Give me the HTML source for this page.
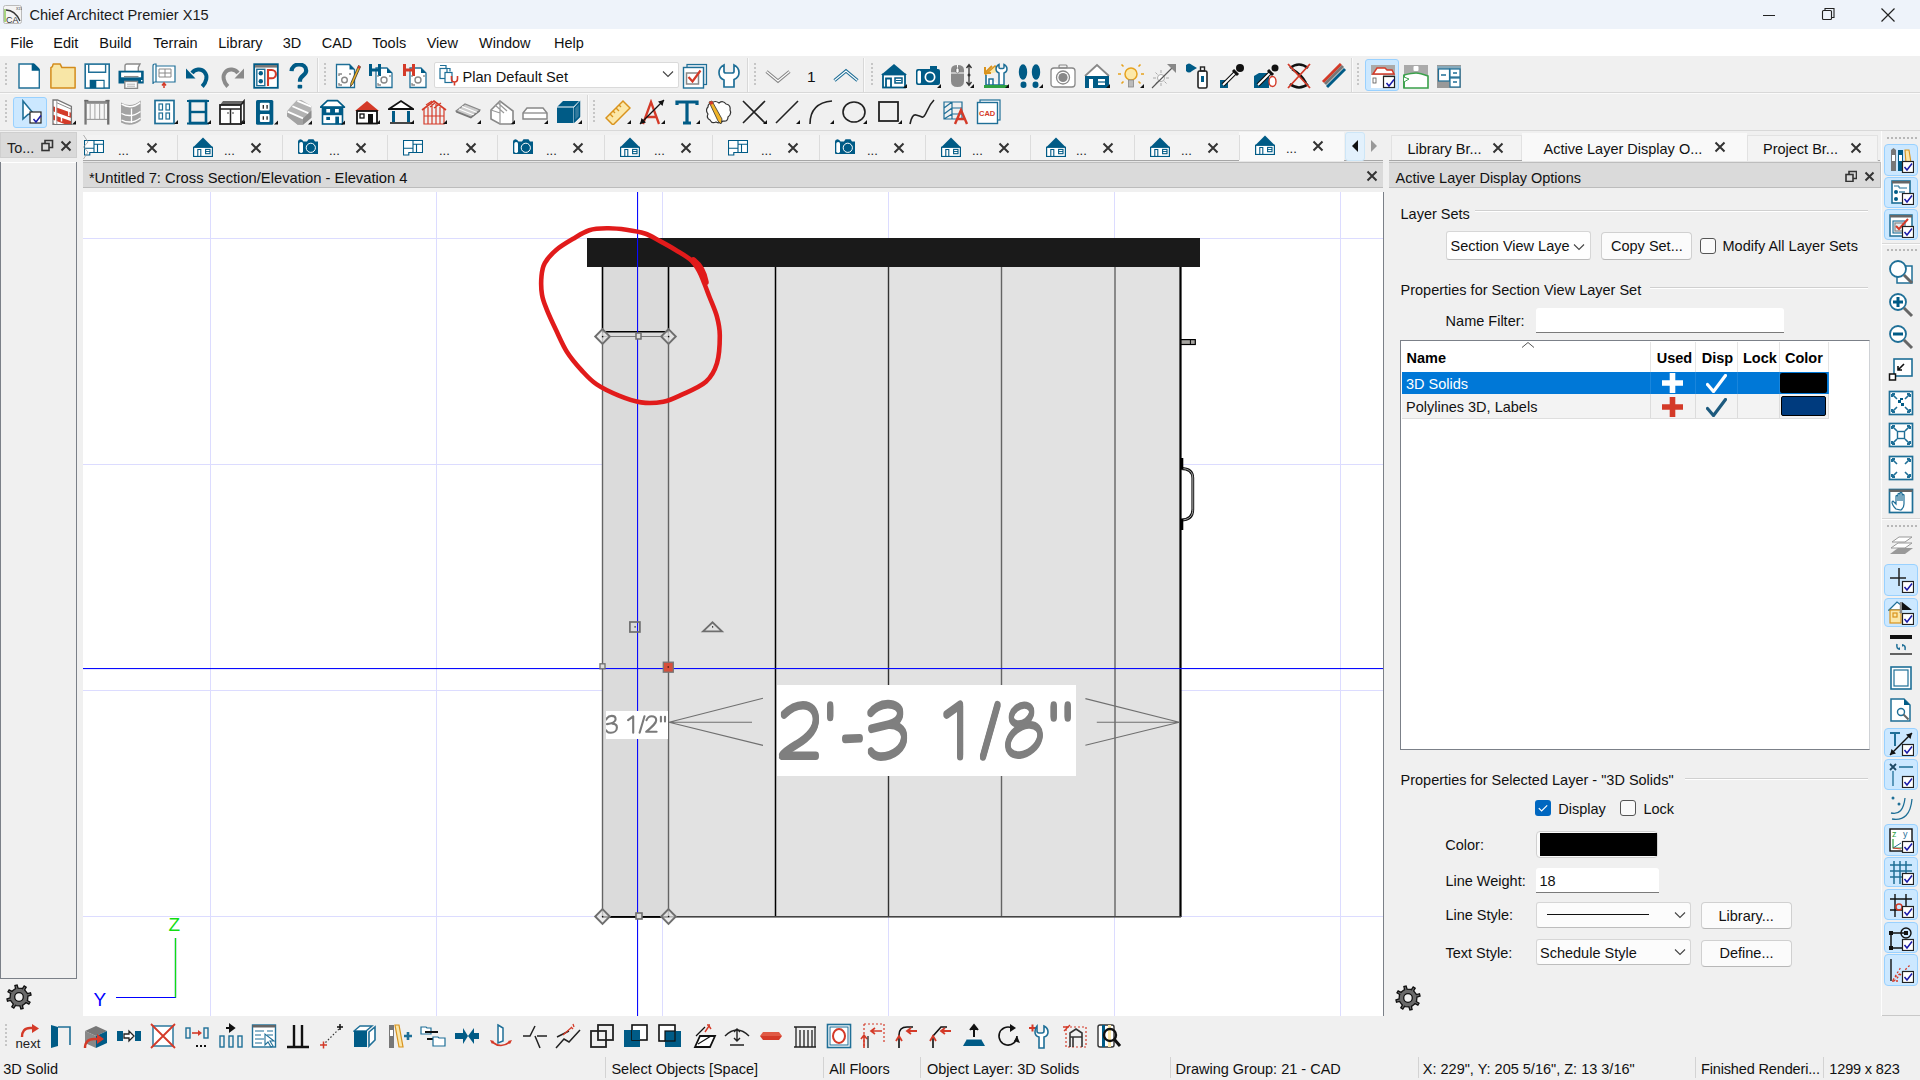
<!DOCTYPE html>
<html><head><meta charset="utf-8"><title>Chief Architect Premier X15</title>
<style>
html,body{margin:0;padding:0;width:1920px;height:1080px;overflow:hidden;background:#f0f0f0;font-family:"Liberation Sans", sans-serif;}
body>div,body>svg{position:absolute;}
.t{white-space:pre;}
</style></head><body>
<div style="left:0px;top:0px;width:1920px;height:29px;background:#eef3fa"></div>
<svg style="left:3px;top:5px;" width="19" height="19" viewBox="0 0 19 19"><rect x="0.5" y="0.5" width="18" height="18" rx="2" fill="#f4f4f4" stroke="#bbb"/><path d="M2 17V4" stroke="#7cc242" stroke-width="1.3"/><path d="M3 5Q12 5 17 16" fill="none" stroke="#333" stroke-width="1.3"/><text x="3" y="17.5" font-family="Liberation Sans" font-size="9" fill="#333">CA</text><text x="13" y="5" font-family="Liberation Sans" font-size="3.5" fill="#333">X15</text></svg>
<div class="t" style="left:29.4px;top:7.84px;font-size:14.6px;line-height:14.6px;color:#1b1b1b;font-weight:400;">Chief Architect Premier X15</div>
<svg style="left:1762px;top:8px;" width="16" height="14" viewBox="0 0 16 14"><path d="M1 7.5h12" stroke="#222" stroke-width="1"/></svg>
<svg style="left:1821px;top:7px;" width="16" height="16" viewBox="0 0 16 16"><rect x="1.5" y="3.5" width="9" height="9" fill="none" stroke="#222" stroke-width="1.1" rx="1"/><path d="M4 3.5V1.5h9v9h-2" fill="none" stroke="#222" stroke-width="1.1"/></svg>
<svg style="left:1880px;top:7px;" width="16" height="16" viewBox="0 0 16 16"><path d="M1.5 1.5l13 13M14.5 1.5l-13 13" stroke="#222" stroke-width="1.2"/></svg>
<div style="left:0px;top:29px;width:1920px;height:27px;background:#ffffff"></div>
<div class="t" style="left:10.3px;top:36.03px;font-size:14.5px;line-height:14.5px;color:#111;font-weight:400;">File</div>
<div class="t" style="left:53.3px;top:36.03px;font-size:14.5px;line-height:14.5px;color:#111;font-weight:400;">Edit</div>
<div class="t" style="left:99.3px;top:36.03px;font-size:14.5px;line-height:14.5px;color:#111;font-weight:400;">Build</div>
<div class="t" style="left:153.3px;top:36.03px;font-size:14.5px;line-height:14.5px;color:#111;font-weight:400;">Terrain</div>
<div class="t" style="left:218.3px;top:36.03px;font-size:14.5px;line-height:14.5px;color:#111;font-weight:400;">Library</div>
<div class="t" style="left:282.7px;top:36.03px;font-size:14.5px;line-height:14.5px;color:#111;font-weight:400;">3D</div>
<div class="t" style="left:321.7px;top:36.03px;font-size:14.5px;line-height:14.5px;color:#111;font-weight:400;">CAD</div>
<div class="t" style="left:372.3px;top:36.03px;font-size:14.5px;line-height:14.5px;color:#111;font-weight:400;">Tools</div>
<div class="t" style="left:426.7px;top:36.03px;font-size:14.5px;line-height:14.5px;color:#111;font-weight:400;">View</div>
<div class="t" style="left:479px;top:36.03px;font-size:14.5px;line-height:14.5px;color:#111;font-weight:400;">Window</div>
<div class="t" style="left:554px;top:36.03px;font-size:14.5px;line-height:14.5px;color:#111;font-weight:400;">Help</div>
<div style="left:0px;top:56px;width:1920px;height:74px;background:#f0f0f0"></div>
<div style="left:0px;top:92px;width:1920px;height:1px;background:#d8d8d8"></div>
<div style="left:0px;top:93px;width:1920px;height:1px;background:#fafafa"></div>
<div style="left:0px;top:130px;width:1920px;height:1px;background:#d8d8d8"></div>
<div style="left:317px;top:58px;width:1px;height:34px;background:#d8d8d8"></div>
<div style="left:318px;top:58px;width:1px;height:34px;background:#fafafa"></div>
<div style="left:747px;top:58px;width:1px;height:34px;background:#d8d8d8"></div>
<div style="left:748px;top:58px;width:1px;height:34px;background:#fafafa"></div>
<div style="left:863px;top:58px;width:1px;height:34px;background:#d8d8d8"></div>
<div style="left:864px;top:58px;width:1px;height:34px;background:#fafafa"></div>
<div style="left:1351px;top:58px;width:1px;height:34px;background:#d8d8d8"></div>
<div style="left:1352px;top:58px;width:1px;height:34px;background:#fafafa"></div>
<div style="left:587px;top:95px;width:1px;height:35px;background:#d8d8d8"></div>
<div style="left:588px;top:95px;width:1px;height:35px;background:#fafafa"></div>
<svg style="left:5px;top:63px;" width="2" height="24" viewBox="0 0 2 24"><rect x="0" y="0" width="2" height="2" fill="#c6c6c6"/><rect x="0" y="4" width="2" height="2" fill="#c6c6c6"/><rect x="0" y="8" width="2" height="2" fill="#c6c6c6"/><rect x="0" y="12" width="2" height="2" fill="#c6c6c6"/><rect x="0" y="16" width="2" height="2" fill="#c6c6c6"/><rect x="0" y="20" width="2" height="2" fill="#c6c6c6"/></svg>
<svg style="left:324px;top:63px;" width="2" height="24" viewBox="0 0 2 24"><rect x="0" y="0" width="2" height="2" fill="#c6c6c6"/><rect x="0" y="4" width="2" height="2" fill="#c6c6c6"/><rect x="0" y="8" width="2" height="2" fill="#c6c6c6"/><rect x="0" y="12" width="2" height="2" fill="#c6c6c6"/><rect x="0" y="16" width="2" height="2" fill="#c6c6c6"/><rect x="0" y="20" width="2" height="2" fill="#c6c6c6"/></svg>
<svg style="left:754px;top:63px;" width="2" height="24" viewBox="0 0 2 24"><rect x="0" y="0" width="2" height="2" fill="#c6c6c6"/><rect x="0" y="4" width="2" height="2" fill="#c6c6c6"/><rect x="0" y="8" width="2" height="2" fill="#c6c6c6"/><rect x="0" y="12" width="2" height="2" fill="#c6c6c6"/><rect x="0" y="16" width="2" height="2" fill="#c6c6c6"/><rect x="0" y="20" width="2" height="2" fill="#c6c6c6"/></svg>
<svg style="left:871px;top:63px;" width="2" height="24" viewBox="0 0 2 24"><rect x="0" y="0" width="2" height="2" fill="#c6c6c6"/><rect x="0" y="4" width="2" height="2" fill="#c6c6c6"/><rect x="0" y="8" width="2" height="2" fill="#c6c6c6"/><rect x="0" y="12" width="2" height="2" fill="#c6c6c6"/><rect x="0" y="16" width="2" height="2" fill="#c6c6c6"/><rect x="0" y="20" width="2" height="2" fill="#c6c6c6"/></svg>
<svg style="left:1357px;top:63px;" width="2" height="24" viewBox="0 0 2 24"><rect x="0" y="0" width="2" height="2" fill="#c6c6c6"/><rect x="0" y="4" width="2" height="2" fill="#c6c6c6"/><rect x="0" y="8" width="2" height="2" fill="#c6c6c6"/><rect x="0" y="12" width="2" height="2" fill="#c6c6c6"/><rect x="0" y="16" width="2" height="2" fill="#c6c6c6"/><rect x="0" y="20" width="2" height="2" fill="#c6c6c6"/></svg>
<svg style="left:5px;top:100px;" width="2" height="24" viewBox="0 0 2 24"><rect x="0" y="0" width="2" height="2" fill="#c6c6c6"/><rect x="0" y="4" width="2" height="2" fill="#c6c6c6"/><rect x="0" y="8" width="2" height="2" fill="#c6c6c6"/><rect x="0" y="12" width="2" height="2" fill="#c6c6c6"/><rect x="0" y="16" width="2" height="2" fill="#c6c6c6"/><rect x="0" y="20" width="2" height="2" fill="#c6c6c6"/></svg>
<svg style="left:593px;top:100px;" width="2" height="24" viewBox="0 0 2 24"><rect x="0" y="0" width="2" height="2" fill="#c6c6c6"/><rect x="0" y="4" width="2" height="2" fill="#c6c6c6"/><rect x="0" y="8" width="2" height="2" fill="#c6c6c6"/><rect x="0" y="12" width="2" height="2" fill="#c6c6c6"/><rect x="0" y="16" width="2" height="2" fill="#c6c6c6"/><rect x="0" y="20" width="2" height="2" fill="#c6c6c6"/></svg>
<div style="left:0px;top:131px;width:1920px;height:885px;background:#f0f0f0"></div>
<div style="left:0px;top:132px;width:77px;height:26px;background:#dadada;border:1px solid #cfcfcf;box-sizing:border-box"></div>
<div class="t" style="left:7px;top:140.73px;font-size:14.5px;line-height:14.5px;color:#222;font-weight:400;">To...</div>
<svg style="left:41px;top:139px;" width="13" height="13" viewBox="0 0 13 13"><rect x="1" y="4.5" width="7" height="7" fill="none" stroke="#333" stroke-width="1.6"/><path d="M4 4.5V1.5h7.5v7H8" fill="none" stroke="#333" stroke-width="1.6"/></svg>
<svg style="left:60px;top:140px;" width="12" height="12" viewBox="0 0 12 12"><path d="M1.5 1.5l9 9M10.5 1.5l-9 9" stroke="#333" stroke-width="2"/></svg>
<div style="left:0px;top:162px;width:77px;height:817px;border:1px solid #7b8088;border-top:none;box-sizing:border-box;background:#f0f0f0"></div>
<div style="left:1px;top:162px;width:75px;height:1px;background:#fff"></div>
<svg style="left:5.5px;top:984.3px;" width="26" height="26" viewBox="0 0 26 26"><path d="M21.60 15.66 L21.31 16.46 L24.03 18.21 L22.86 20.19 L20.02 18.64 L17.20 20.96 L17.20 20.96 L16.43 21.32 L17.11 24.49 L14.89 25.05 L13.97 21.95 L10.34 21.60 L10.34 21.60 L9.54 21.31 L7.79 24.03 L5.81 22.86 L7.36 20.02 L5.04 17.20 L5.04 17.20 L4.68 16.43 L1.51 17.11 L0.95 14.89 L4.05 13.97 L4.40 10.34 L4.40 10.34 L4.69 9.54 L1.97 7.79 L3.14 5.81 L5.98 7.36 L8.80 5.04 L8.80 5.04 L9.57 4.68 L8.89 1.51 L11.11 0.95 L12.03 4.05 L15.66 4.40 L15.66 4.40 L16.46 4.69 L18.21 1.97 L20.19 3.14 L18.64 5.98 L20.96 8.80 L20.96 8.80 L21.32 9.57 L24.49 8.89 L25.05 11.11 L21.95 12.03 L21.60 15.66Z" fill="#6a6a6a" stroke="#111" stroke-width="1.3"/><circle cx="13" cy="13" r="4.3" fill="#f0f0f0" stroke="#111" stroke-width="1.3"/></svg>
<svg style="left:1394.5px;top:984.5px;" width="26" height="26" viewBox="0 0 26 26"><path d="M21.60 15.66 L21.31 16.46 L24.03 18.21 L22.86 20.19 L20.02 18.64 L17.20 20.96 L17.20 20.96 L16.43 21.32 L17.11 24.49 L14.89 25.05 L13.97 21.95 L10.34 21.60 L10.34 21.60 L9.54 21.31 L7.79 24.03 L5.81 22.86 L7.36 20.02 L5.04 17.20 L5.04 17.20 L4.68 16.43 L1.51 17.11 L0.95 14.89 L4.05 13.97 L4.40 10.34 L4.40 10.34 L4.69 9.54 L1.97 7.79 L3.14 5.81 L5.98 7.36 L8.80 5.04 L8.80 5.04 L9.57 4.68 L8.89 1.51 L11.11 0.95 L12.03 4.05 L15.66 4.40 L15.66 4.40 L16.46 4.69 L18.21 1.97 L20.19 3.14 L18.64 5.98 L20.96 8.80 L20.96 8.80 L21.32 9.57 L24.49 8.89 L25.05 11.11 L21.95 12.03 L21.60 15.66Z" fill="#6a6a6a" stroke="#111" stroke-width="1.3"/><circle cx="13" cy="13" r="4.3" fill="#f0f0f0" stroke="#111" stroke-width="1.3"/></svg>
<div style="left:83px;top:132px;width:1300px;height:29px;background:#f0f0f0"></div>
<div style="left:83px;top:160px;width:1300px;height:1px;background:#a6a6a6"></div>
<div style="left:83px;top:161px;width:1300px;height:1px;background:#e6e6e6"></div>
<div style="left:83px;top:135px;width:94px;height:25px;background:#f3f3f3"></div>
<div style="left:177px;top:135px;width:105px;height:25px;background:#f3f3f3"></div>
<div style="left:282px;top:135px;width:105px;height:25px;background:#f3f3f3"></div>
<div style="left:387px;top:135px;width:110px;height:25px;background:#f3f3f3"></div>
<div style="left:497px;top:135px;width:107px;height:25px;background:#f3f3f3"></div>
<div style="left:604px;top:135px;width:108px;height:25px;background:#f3f3f3"></div>
<div style="left:712px;top:135px;width:107px;height:25px;background:#f3f3f3"></div>
<div style="left:819px;top:135px;width:106px;height:25px;background:#f3f3f3"></div>
<div style="left:925px;top:135px;width:105px;height:25px;background:#f3f3f3"></div>
<div style="left:1030px;top:135px;width:104px;height:25px;background:#f3f3f3"></div>
<div style="left:1134px;top:135px;width:105px;height:25px;background:#f3f3f3"></div>
<div style="left:1239px;top:132px;width:105px;height:29px;background:#f9f9f9"></div>
<div style="left:177px;top:135px;width:1px;height:25px;background:#dcdcdc"></div>
<div style="left:282px;top:135px;width:1px;height:25px;background:#dcdcdc"></div>
<div style="left:387px;top:135px;width:1px;height:25px;background:#dcdcdc"></div>
<div style="left:497px;top:135px;width:1px;height:25px;background:#dcdcdc"></div>
<div style="left:604px;top:135px;width:1px;height:25px;background:#dcdcdc"></div>
<div style="left:712px;top:135px;width:1px;height:25px;background:#dcdcdc"></div>
<div style="left:819px;top:135px;width:1px;height:25px;background:#dcdcdc"></div>
<div style="left:925px;top:135px;width:1px;height:25px;background:#dcdcdc"></div>
<div style="left:1030px;top:135px;width:1px;height:25px;background:#dcdcdc"></div>
<div style="left:1134px;top:135px;width:1px;height:25px;background:#dcdcdc"></div>
<div style="left:1239px;top:135px;width:1px;height:25px;background:#dcdcdc"></div>
<svg style="left:84px;top:140px;" width="20" height="16" viewBox="0 0 20 16"><path d="M0.5 0.5h19v12H5.8v2.5H0.5zM10 0.5v12M0.5 8.3H10M10 4.3h9.5M13.5 4.3v8.2" fill="#fff" stroke="#005b86" stroke-width="1.1"/></svg>
<div class="t" style="left:118px;top:144.00px;font-size:13px;line-height:13px;color:#222;font-weight:400;">...</div>
<svg style="left:145.5px;top:142px;" width="12" height="12" viewBox="0 0 12 12"><path d="M1.5 1.5l9 9M10.5 1.5l-9 9" stroke="#333" stroke-width="2"/></svg>
<svg style="left:193px;top:137px;" width="20" height="20" viewBox="0 0 20 20"><path d="M0 10.5L10 0.5l10 10z" fill="#005b86"/><rect x="0.6" y="10.3" width="18.8" height="9.2" fill="#fff" stroke="#005b86" stroke-width="1.2"/><path d="M4.8 19.5v-7h3v7" fill="none" stroke="#005b86" stroke-width="1.1"/><rect x="12.6" y="12.4" width="4.4" height="4.3" fill="none" stroke="#005b86" stroke-width="1.1"/><path d="M12.6 14.5h4.4" stroke="#005b86" stroke-width="0.9"/></svg>
<div class="t" style="left:224px;top:144.00px;font-size:13px;line-height:13px;color:#222;font-weight:400;">...</div>
<svg style="left:250px;top:142px;" width="12" height="12" viewBox="0 0 12 12"><path d="M1.5 1.5l9 9M10.5 1.5l-9 9" stroke="#333" stroke-width="2"/></svg>
<svg style="left:298px;top:139px;" width="20" height="15" viewBox="0 0 20 15"><path d="M0 2.5q0-2 2.5-2.2 2 .2 3 2.2h3.5l1.5-2.2h5l1.5 2.2h3v12.5H1q-1 0-1-1z" fill="#005b86"/><rect x="1.3" y="3" width="3.7" height="11" rx="1.8" fill="#fff"/><circle cx="12.8" cy="8.8" r="4.6" fill="#005b86" stroke="#fff" stroke-width="1"/></svg>
<div class="t" style="left:329px;top:144.00px;font-size:13px;line-height:13px;color:#222;font-weight:400;">...</div>
<svg style="left:355px;top:142px;" width="12" height="12" viewBox="0 0 12 12"><path d="M1.5 1.5l9 9M10.5 1.5l-9 9" stroke="#333" stroke-width="2"/></svg>
<svg style="left:403px;top:140px;" width="20" height="16" viewBox="0 0 20 16"><path d="M0.5 0.5h19v12H5.8v2.5H0.5zM10 0.5v12M0.5 8.3H10M10 4.3h9.5M13.5 4.3v8.2" fill="#fff" stroke="#005b86" stroke-width="1.1"/></svg>
<div class="t" style="left:439px;top:144.00px;font-size:13px;line-height:13px;color:#222;font-weight:400;">...</div>
<svg style="left:465px;top:142px;" width="12" height="12" viewBox="0 0 12 12"><path d="M1.5 1.5l9 9M10.5 1.5l-9 9" stroke="#333" stroke-width="2"/></svg>
<svg style="left:513px;top:139px;" width="20" height="15" viewBox="0 0 20 15"><path d="M0 2.5q0-2 2.5-2.2 2 .2 3 2.2h3.5l1.5-2.2h5l1.5 2.2h3v12.5H1q-1 0-1-1z" fill="#005b86"/><rect x="1.3" y="3" width="3.7" height="11" rx="1.8" fill="#fff"/><circle cx="12.8" cy="8.8" r="4.6" fill="#005b86" stroke="#fff" stroke-width="1"/></svg>
<div class="t" style="left:546px;top:144.00px;font-size:13px;line-height:13px;color:#222;font-weight:400;">...</div>
<svg style="left:572px;top:142px;" width="12" height="12" viewBox="0 0 12 12"><path d="M1.5 1.5l9 9M10.5 1.5l-9 9" stroke="#333" stroke-width="2"/></svg>
<svg style="left:620px;top:137px;" width="20" height="20" viewBox="0 0 20 20"><path d="M0 10.5L10 0.5l10 10z" fill="#005b86"/><rect x="0.6" y="10.3" width="18.8" height="9.2" fill="#fff" stroke="#005b86" stroke-width="1.2"/><path d="M4.8 19.5v-7h3v7" fill="none" stroke="#005b86" stroke-width="1.1"/><rect x="12.6" y="12.4" width="4.4" height="4.3" fill="none" stroke="#005b86" stroke-width="1.1"/><path d="M12.6 14.5h4.4" stroke="#005b86" stroke-width="0.9"/></svg>
<div class="t" style="left:654px;top:144.00px;font-size:13px;line-height:13px;color:#222;font-weight:400;">...</div>
<svg style="left:680px;top:142px;" width="12" height="12" viewBox="0 0 12 12"><path d="M1.5 1.5l9 9M10.5 1.5l-9 9" stroke="#333" stroke-width="2"/></svg>
<svg style="left:728px;top:140px;" width="20" height="16" viewBox="0 0 20 16"><path d="M0.5 0.5h19v12H5.8v2.5H0.5zM10 0.5v12M0.5 8.3H10M10 4.3h9.5M13.5 4.3v8.2" fill="#fff" stroke="#005b86" stroke-width="1.1"/></svg>
<div class="t" style="left:761px;top:144.00px;font-size:13px;line-height:13px;color:#222;font-weight:400;">...</div>
<svg style="left:787px;top:142px;" width="12" height="12" viewBox="0 0 12 12"><path d="M1.5 1.5l9 9M10.5 1.5l-9 9" stroke="#333" stroke-width="2"/></svg>
<svg style="left:835px;top:139px;" width="20" height="15" viewBox="0 0 20 15"><path d="M0 2.5q0-2 2.5-2.2 2 .2 3 2.2h3.5l1.5-2.2h5l1.5 2.2h3v12.5H1q-1 0-1-1z" fill="#005b86"/><rect x="1.3" y="3" width="3.7" height="11" rx="1.8" fill="#fff"/><circle cx="12.8" cy="8.8" r="4.6" fill="#005b86" stroke="#fff" stroke-width="1"/></svg>
<div class="t" style="left:867px;top:144.00px;font-size:13px;line-height:13px;color:#222;font-weight:400;">...</div>
<svg style="left:893px;top:142px;" width="12" height="12" viewBox="0 0 12 12"><path d="M1.5 1.5l9 9M10.5 1.5l-9 9" stroke="#333" stroke-width="2"/></svg>
<svg style="left:941px;top:137px;" width="20" height="20" viewBox="0 0 20 20"><path d="M0 10.5L10 0.5l10 10z" fill="#005b86"/><rect x="0.6" y="10.3" width="18.8" height="9.2" fill="#fff" stroke="#005b86" stroke-width="1.2"/><path d="M4.8 19.5v-7h3v7" fill="none" stroke="#005b86" stroke-width="1.1"/><rect x="12.6" y="12.4" width="4.4" height="4.3" fill="none" stroke="#005b86" stroke-width="1.1"/><path d="M12.6 14.5h4.4" stroke="#005b86" stroke-width="0.9"/></svg>
<div class="t" style="left:972px;top:144.00px;font-size:13px;line-height:13px;color:#222;font-weight:400;">...</div>
<svg style="left:998px;top:142px;" width="12" height="12" viewBox="0 0 12 12"><path d="M1.5 1.5l9 9M10.5 1.5l-9 9" stroke="#333" stroke-width="2"/></svg>
<svg style="left:1046px;top:137px;" width="20" height="20" viewBox="0 0 20 20"><path d="M0 10.5L10 0.5l10 10z" fill="#005b86"/><rect x="0.6" y="10.3" width="18.8" height="9.2" fill="#fff" stroke="#005b86" stroke-width="1.2"/><path d="M4.8 19.5v-7h3v7" fill="none" stroke="#005b86" stroke-width="1.1"/><rect x="12.6" y="12.4" width="4.4" height="4.3" fill="none" stroke="#005b86" stroke-width="1.1"/><path d="M12.6 14.5h4.4" stroke="#005b86" stroke-width="0.9"/></svg>
<div class="t" style="left:1076px;top:144.00px;font-size:13px;line-height:13px;color:#222;font-weight:400;">...</div>
<svg style="left:1102px;top:142px;" width="12" height="12" viewBox="0 0 12 12"><path d="M1.5 1.5l9 9M10.5 1.5l-9 9" stroke="#333" stroke-width="2"/></svg>
<svg style="left:1150px;top:137px;" width="20" height="20" viewBox="0 0 20 20"><path d="M0 10.5L10 0.5l10 10z" fill="#005b86"/><rect x="0.6" y="10.3" width="18.8" height="9.2" fill="#fff" stroke="#005b86" stroke-width="1.2"/><path d="M4.8 19.5v-7h3v7" fill="none" stroke="#005b86" stroke-width="1.1"/><rect x="12.6" y="12.4" width="4.4" height="4.3" fill="none" stroke="#005b86" stroke-width="1.1"/><path d="M12.6 14.5h4.4" stroke="#005b86" stroke-width="0.9"/></svg>
<div class="t" style="left:1181px;top:144.00px;font-size:13px;line-height:13px;color:#222;font-weight:400;">...</div>
<svg style="left:1207px;top:142px;" width="12" height="12" viewBox="0 0 12 12"><path d="M1.5 1.5l9 9M10.5 1.5l-9 9" stroke="#333" stroke-width="2"/></svg>
<svg style="left:1255px;top:135px;" width="20" height="20" viewBox="0 0 20 20"><path d="M0 10.5L10 0.5l10 10z" fill="#005b86"/><rect x="0.6" y="10.3" width="18.8" height="9.2" fill="#fff" stroke="#005b86" stroke-width="1.2"/><path d="M4.8 19.5v-7h3v7" fill="none" stroke="#005b86" stroke-width="1.1"/><rect x="12.6" y="12.4" width="4.4" height="4.3" fill="none" stroke="#005b86" stroke-width="1.1"/><path d="M12.6 14.5h4.4" stroke="#005b86" stroke-width="0.9"/></svg>
<div class="t" style="left:1286px;top:142.00px;font-size:13px;line-height:13px;color:#222;font-weight:400;">...</div>
<svg style="left:1312px;top:140px;" width="12" height="12" viewBox="0 0 12 12"><path d="M1.5 1.5l9 9M10.5 1.5l-9 9" stroke="#333" stroke-width="2"/></svg>
<svg style="left:83px;top:134px;" width="6" height="26" viewBox="0 0 6 26"><path d="M0.5 1l4.5 7-4.5 5 4.5 5-4.5 7" fill="none" stroke="#9a9a9a" stroke-width="0.8"/></svg>
<div style="left:1345px;top:132px;width:20px;height:29px;background:#e3f1fc;border:1px solid #cde6f7;border-radius:3px;box-sizing:border-box"></div>
<svg style="left:1350px;top:139px;" width="10" height="14" viewBox="0 0 10 14"><path d="M8 1L2 7l6 6z" fill="#111"/></svg>
<svg style="left:1369px;top:139px;" width="10" height="14" viewBox="0 0 10 14"><path d="M2 1l6 6-6 6z" fill="#999"/></svg>
<div style="left:83px;top:162px;width:1300px;height:26px;background:#dadada;border-top:1px solid #bdbdbd;border-bottom:1px solid #bcbcbc;box-sizing:border-box"></div>
<div class="t" style="left:88.9px;top:170.52px;font-size:14.74px;line-height:14.74px;color:#111;font-weight:400;">*Untitled 7: Cross Section/Elevation - Elevation 4</div>
<svg style="left:1366px;top:170px;" width="12" height="12" viewBox="0 0 12 12"><path d="M1.5 1.5l9 9M10.5 1.5l-9 9" stroke="#333" stroke-width="2"/></svg>
<svg style="left:83px;top:192px;" width="1301" height="824" viewBox="83 192 1301 824"><rect x="83" y="192" width="1300" height="824" fill="#fff"/><rect x="210" y="192" width="1" height="824" fill="#dcdcff"/><rect x="436" y="192" width="1" height="824" fill="#dcdcff"/><rect x="662" y="192" width="1" height="824" fill="#dcdcff"/><rect x="888" y="192" width="1" height="824" fill="#dcdcff"/><rect x="1114" y="192" width="1" height="824" fill="#dcdcff"/><rect x="1340" y="192" width="1" height="824" fill="#dcdcff"/><rect x="83" y="238" width="1300" height="1" fill="#dcdcff"/><rect x="83" y="464" width="1300" height="1" fill="#dcdcff"/><rect x="83" y="690" width="1300" height="1" fill="#dcdcff"/><rect x="83" y="916" width="1300" height="1" fill="#dcdcff"/><rect x="602" y="267" width="578" height="650" fill="#e2e2e2"/><rect x="603" y="267" width="65" height="650" fill="#dbdbdb"/><rect x="601.70" y="267" width="1.6" height="64" fill="#000"/><rect x="601.80" y="331" width="1.4" height="586" fill="#646464"/><rect x="667.70" y="267" width="1.6" height="64" fill="#000"/><rect x="667.80" y="331" width="1.4" height="586" fill="#646464"/><rect x="774.75" y="267" width="1.5" height="650" fill="#000"/><rect x="887.80" y="267" width="1.4" height="650" fill="#333"/><rect x="1000.80" y="267" width="1.4" height="650" fill="#646464"/><rect x="1114.30" y="267" width="1.4" height="650" fill="#646464"/><rect x="1179.40" y="267" width="2.2" height="650" fill="#000"/><rect x="602" y="916" width="579" height="1.6" fill="#444"/><rect x="602" y="916" width="66" height="1.8" fill="#000"/><rect x="587" y="238" width="613" height="29" fill="#1a1a1a"/><rect x="602" y="331" width="67" height="1.5" fill="#000"/><rect x="602" y="336" width="67" height="1" fill="#7a7a7a"/><rect x="1181" y="339.6" width="14.3" height="4.9" fill="#a6a4a0" stroke="#000" stroke-width="1.2"/><path d="M1190.4 339.6v4.9" stroke="#000" stroke-width="1"/><path d="M1181 468.5 C1189 468.5 1192.8 472 1192.8 478 V509.5 C1192.8 516 1189 520 1181 520" fill="none" stroke="#111" stroke-width="2.8"/><path d="M1181 468.5 C1189 468.5 1192.8 472 1192.8 478 V509.5 C1192.8 516 1189 520 1181 520" fill="none" stroke="#a8a8a8" stroke-width="1.0"/><path d="M1182 458v11M1182 519v11" stroke="#000" stroke-width="2.6"/><rect x="637" y="192" width="1.1" height="824" fill="#0a0aff"/><rect x="83" y="668" width="1300" height="1.1" fill="#0a0aff"/><path d="M602.5 329.2L609.8 336.5L602.5 343.8L595.2 336.5Z" fill="#e4e4e4" fill-opacity="0.7" stroke="#6e6e6e" stroke-width="1.9"/><rect x="601.9" y="335.9" width="1.4" height="1.4" fill="#111"/><path d="M668.5 329.2L675.8 336.5L668.5 343.8L661.2 336.5Z" fill="#e4e4e4" fill-opacity="0.7" stroke="#6e6e6e" stroke-width="1.9"/><rect x="667.9" y="335.9" width="1.4" height="1.4" fill="#111"/><path d="M602.5 909.2L609.8 916.5L602.5 923.8L595.2 916.5Z" fill="#e4e4e4" fill-opacity="0.7" stroke="#6e6e6e" stroke-width="1.9"/><rect x="601.9" y="915.9" width="1.4" height="1.4" fill="#111"/><path d="M668.5 909.2L675.8 916.5L668.5 923.8L661.2 916.5Z" fill="#e4e4e4" fill-opacity="0.7" stroke="#6e6e6e" stroke-width="1.9"/><rect x="667.9" y="915.9" width="1.4" height="1.4" fill="#111"/><rect x="636" y="333" width="5" height="6" fill="#ddd" stroke="#6e6e6e" stroke-width="1.5"/><rect x="636" y="913" width="6" height="6" fill="#ddd" stroke="#6e6e6e" stroke-width="1.6"/><rect x="629.9" y="622" width="10" height="10" fill="none" stroke="#6e6e6e" stroke-width="1.7"/><rect x="634.5" y="626.3" width="1.2" height="1.2" fill="#000"/><path d="M703 631.3L712.5 622.3L722 631.3Z" fill="none" stroke="#6e6e6e" stroke-width="1.8"/><rect x="712" y="626.3" width="1.2" height="1.2" fill="#000"/><rect x="600" y="663.8" width="5" height="5" fill="#ddd" stroke="#6e6e6e" stroke-width="1.3"/><rect x="663.3" y="662.2" width="10" height="10" fill="#d6503c" stroke="#777" stroke-width="1.3"/><rect x="667.6" y="666.4" width="1.2" height="1.2" fill="#000"/><rect x="606" y="711" width="62" height="28" fill="#fff"/><g clip-path="url(#c312)"><path d="M606.2 719.5 C607.5 717 609.5 715.9 611.7 715.9 C614 715.9 615.6 717.3 615.6 719.3 C615.6 721.6 613.5 723.4 607 724.1 M612.5 723.6 C615.5 723.8 616.9 725.3 616.9 727.4 C616.9 730.6 614.2 732.8 610.9 732.8 C608.6 732.8 607 731.8 606.2 730.4 M628.1 720.2 L633.2 716.3 V732.7 M644.5 716.3 L639.6 732.7 M646.5 720.2 C647.5 717.6 649.5 716.2 651.6 716.2 C654.4 716.2 656.2 718 656.2 720.2 C656.2 723 653.5 725.5 646.2 731.8 H656.6 M660.9 716.8 V721.4 M665 716.8 V721.4" fill="none" stroke="#7a7a7a" stroke-width="2.1" stroke-linecap="round" stroke-linejoin="round"/></g><clipPath id="c312"><rect x="606" y="705" width="62" height="35"/></clipPath><path d="M669 722.2L763 698.2M669 722.2L763 745.4M669 722.2H752" stroke="#707070" stroke-width="1.1" fill="none"/><path d="M1179.3 722.2L1085.4 698.6M1179.3 722.2L1085.4 745.2M1096.8 722.2H1179.3" stroke="#707070" stroke-width="1.1" fill="none"/><rect x="777" y="685" width="299" height="91" fill="#fff"/><path transform="translate(0 -1.3)" d="M784 714.5 C790 708.5 797 705.2 803 705.2 C811 705.2 815.9 711 815.9 719.3 C815.9 729 809 737 797.4 744 C790 748.5 784 752 782 755.8 H815.8 M830.2 705.6 V717 M845.2 738.9 L859.7 738.3 M870.6 712.8 C873.5 709 880 704.1 887.9 704.1 C895 704.1 900.2 707.5 900.2 712.9 C900.2 718.5 895.5 723 889 724.5 L871.3 728.8 M889 724.8 C896 724.5 904.1 728 904.1 737 C904.1 748 893.5 756.6 880.8 756.6 C876.5 756.6 873 754.5 871 751.5 M946.6 714.5 L960.1 704.8 V756.3 M997.5 705.2 L983 756.5 M1053.7 705.6 V717.5 M1067.7 705.6 V717.5" fill="none" stroke="#7f7f7f" stroke-width="6.0" stroke-linecap="round" stroke-linejoin="round"/><path transform="translate(0 0)" d="M784 714.5 C790 708.5 797 705.2 803 705.2 C811 705.2 815.9 711 815.9 719.3 C815.9 729 809 737 797.4 744 C790 748.5 784 752 782 755.8 H815.8 M830.2 705.6 V717 M845.2 738.9 L859.7 738.3 M870.6 712.8 C873.5 709 880 704.1 887.9 704.1 C895 704.1 900.2 707.5 900.2 712.9 C900.2 718.5 895.5 723 889 724.5 L871.3 728.8 M889 724.8 C896 724.5 904.1 728 904.1 737 C904.1 748 893.5 756.6 880.8 756.6 C876.5 756.6 873 754.5 871 751.5 M946.6 714.5 L960.1 704.8 V756.3 M997.5 705.2 L983 756.5 M1053.7 705.6 V717.5 M1067.7 705.6 V717.5" fill="none" stroke="#7f7f7f" stroke-width="6.0" stroke-linecap="round" stroke-linejoin="round"/><path transform="translate(0 1.3)" d="M784 714.5 C790 708.5 797 705.2 803 705.2 C811 705.2 815.9 711 815.9 719.3 C815.9 729 809 737 797.4 744 C790 748.5 784 752 782 755.8 H815.8 M830.2 705.6 V717 M845.2 738.9 L859.7 738.3 M870.6 712.8 C873.5 709 880 704.1 887.9 704.1 C895 704.1 900.2 707.5 900.2 712.9 C900.2 718.5 895.5 723 889 724.5 L871.3 728.8 M889 724.8 C896 724.5 904.1 728 904.1 737 C904.1 748 893.5 756.6 880.8 756.6 C876.5 756.6 873 754.5 871 751.5 M946.6 714.5 L960.1 704.8 V756.3 M997.5 705.2 L983 756.5 M1053.7 705.6 V717.5 M1067.7 705.6 V717.5" fill="none" stroke="#7f7f7f" stroke-width="6.0" stroke-linecap="round" stroke-linejoin="round"/><g transform="translate(0 -1.2)"><ellipse cx="1021.5" cy="714.6" rx="11.2" ry="8.2" transform="rotate(-38 1021.5 714.6)" fill="none" stroke="#7f7f7f" stroke-width="5"/><ellipse cx="1024" cy="740" rx="18.2" ry="12.6" transform="rotate(-40 1024 740)" fill="none" stroke="#7f7f7f" stroke-width="5.2"/></g><g transform="translate(0 0)"><ellipse cx="1021.5" cy="714.6" rx="11.2" ry="8.2" transform="rotate(-38 1021.5 714.6)" fill="none" stroke="#7f7f7f" stroke-width="5"/><ellipse cx="1024" cy="740" rx="18.2" ry="12.6" transform="rotate(-40 1024 740)" fill="none" stroke="#7f7f7f" stroke-width="5.2"/></g><g transform="translate(0 1.2)"><ellipse cx="1021.5" cy="714.6" rx="11.2" ry="8.2" transform="rotate(-38 1021.5 714.6)" fill="none" stroke="#7f7f7f" stroke-width="5"/><ellipse cx="1024" cy="740" rx="18.2" ry="12.6" transform="rotate(-40 1024 740)" fill="none" stroke="#7f7f7f" stroke-width="5.2"/></g><path d="M691.5 260.5 C687.6 256.9 681.3 253.5 676.0 250.2 C670.7 246.9 664.8 243.7 659.6 240.9 C654.4 238.1 650.3 235.3 644.8 233.5 C639.2 231.7 632.5 230.7 626.3 229.8 C620.1 228.9 614.0 228.2 607.8 228.3 C601.6 228.4 595.2 228.4 589.3 230.2 C583.4 232.0 578.2 235.8 572.6 239.1 C567.0 242.4 560.5 246.2 555.9 250.2 C551.3 254.2 547.2 258.8 544.8 263.1 C542.4 267.4 542.0 270.9 541.5 276.1 C541.0 281.4 541.1 289.1 542.0 294.6 C542.9 300.2 544.4 303.5 546.7 309.4 C549.0 315.3 552.5 322.7 555.9 329.8 C559.3 336.9 562.7 345.2 567.0 352.0 C571.3 358.8 576.9 365.2 581.9 370.6 C586.9 376.0 590.5 380.2 596.7 384.4 C602.9 388.6 611.5 392.6 618.9 395.6 C626.3 398.6 633.7 401.4 641.1 402.4 C648.5 403.4 656.5 403.0 663.3 401.7 C670.1 400.4 674.8 397.9 681.9 394.6 C689.0 391.3 700.0 386.9 705.9 381.7 C711.8 376.4 714.7 370.8 717.0 363.1 C719.3 355.4 719.8 343.1 719.8 335.4 C719.8 327.7 718.7 323.3 717.0 316.9 C715.3 310.5 711.6 302.5 709.5 297.0 C707.4 291.5 706.2 288.2 704.5 284.0 C702.8 279.8 701.7 275.9 699.5 272.0 C697.3 268.1 695.4 264.1 691.5 260.5" fill="none" stroke="#e11b1b" stroke-width="4.6" stroke-linejoin="round"/><path d="M693.5 260.5 Q703 268 705.5 282" fill="none" stroke="#e11b1b" stroke-width="6.5" stroke-linecap="round"/><path d="M175.5 938V997.5H116" fill="none" stroke="#0000ff" stroke-width="1.2"/><path d="M175.5 938V997.5" fill="none" stroke="#11dd11" stroke-width="1.3"/><text x="168.5" y="931" font-family="Liberation Sans" font-size="19" fill="#11dd11">Z</text><text x="93.5" y="1005.5" font-family="Liberation Sans" font-size="19" fill="#0000ff">Y</text><rect x="1383" y="192" width="1" height="824" fill="#7b8088"/></svg>
<div style="left:1391px;top:135px;width:131px;height:26px;background:#f3f3f3;border:1px solid #e2e2e2;border-bottom:none;box-sizing:border-box"></div>
<div style="left:1389px;top:160px;width:491px;height:1px;background:#a6a6a6"></div>
<div style="left:1389px;top:161px;width:491px;height:1px;background:#e6e6e6"></div>
<div class="t" style="left:1407.5px;top:142.23px;font-size:14.5px;line-height:14.5px;color:#111;font-weight:400;">Library Br...</div>
<svg style="left:1492px;top:142px;" width="12" height="12" viewBox="0 0 12 12"><path d="M1.5 1.5l9 9M10.5 1.5l-9 9" stroke="#333" stroke-width="2"/></svg>
<div style="left:1522px;top:133px;width:225px;height:28px;background:#f9f9f9"></div>
<div class="t" style="left:1543.5px;top:142.23px;font-size:14.5px;line-height:14.5px;color:#111;font-weight:400;">Active Layer Display O...</div>
<svg style="left:1714px;top:141px;" width="12" height="12" viewBox="0 0 12 12"><path d="M1.5 1.5l9 9M10.5 1.5l-9 9" stroke="#333" stroke-width="2"/></svg>
<div style="left:1747px;top:135px;width:131px;height:26px;background:#f3f3f3;border:1px solid #e2e2e2;border-bottom:none;box-sizing:border-box"></div>
<div class="t" style="left:1763px;top:142.23px;font-size:14.5px;line-height:14.5px;color:#111;font-weight:400;">Project Br...</div>
<svg style="left:1850px;top:142px;" width="12" height="12" viewBox="0 0 12 12"><path d="M1.5 1.5l9 9M10.5 1.5l-9 9" stroke="#333" stroke-width="2"/></svg>
<div style="left:1389px;top:162px;width:492px;height:26px;background:#dadada;border-top:1px solid #bdbdbd;border-bottom:1px solid #bcbcbc;border-right:1px solid #c0c0c0;box-sizing:border-box"></div>
<div class="t" style="left:1395.6px;top:170.73px;font-size:14.5px;line-height:14.5px;color:#111;font-weight:400;">Active Layer Display Options</div>
<svg style="left:1845px;top:170px;" width="12" height="12" viewBox="0 0 12 12"><rect x="1" y="4.5" width="7" height="7" fill="none" stroke="#333" stroke-width="1.6"/><path d="M4 4.5V1.5h7.5v7H8" fill="none" stroke="#333" stroke-width="1.6"/></svg>
<svg style="left:1864px;top:171px;" width="11" height="11" viewBox="0 0 11 11"><path d="M1.5 1.5l8 8M9.5 1.5l-8 8" stroke="#333" stroke-width="2"/></svg>
<div style="left:1383px;top:192px;width:1px;height:824px;background:#7b8088"></div>
<div class="t" style="left:1400.5px;top:206.73px;font-size:14.5px;line-height:14.5px;color:#111;font-weight:400;">Layer Sets</div>
<div style="left:1475px;top:210px;width:393px;height:1px;background:#d0d0d0"></div>
<div style="left:1475px;top:211px;width:393px;height:1px;background:#fff"></div>
<div style="left:1445.5px;top:231px;width:145px;height:29px;background:#fefefe;border:1px solid #d6d6d6;border-bottom-color:#bdbdbd;border-radius:3px;box-sizing:border-box"></div>
<div class="t" style="left:1450.5px;top:238.73px;font-size:14.5px;line-height:14.5px;color:#111;font-weight:400;">Section View Laye</div>
<svg style="left:1573px;top:243px;" width="12" height="8" viewBox="0 0 12 8"><path d="M1 1.5l5 5 5-5" fill="none" stroke="#444" stroke-width="1.1"/></svg>
<div style="left:1600.5px;top:231.5px;width:91px;height:28px;background:#fbfbfb;border:1px solid #d0d0d0;border-bottom-color:#b8b8b8;border-radius:4px;box-sizing:border-box"></div>
<div class="t" style="left:1611px;top:238.73px;font-size:14.5px;line-height:14.5px;color:#111;font-weight:400;">Copy Set...</div>
<div style="left:1700px;top:237.5px;width:16px;height:16px;background:#fafafa;border:1px solid #555;border-radius:3px;box-sizing:border-box"></div>
<div class="t" style="left:1722.5px;top:238.73px;font-size:14.5px;line-height:14.5px;color:#111;font-weight:400;">Modify All Layer Sets</div>
<div class="t" style="left:1400.5px;top:282.93px;font-size:14.5px;line-height:14.5px;color:#111;font-weight:400;">Properties for Section View Layer Set</div>
<div style="left:1650px;top:287px;width:218px;height:1px;background:#d0d0d0"></div>
<div style="left:1650px;top:288px;width:218px;height:1px;background:#fff"></div>
<div class="t" style="left:1445.6px;top:313.73px;font-size:14.5px;line-height:14.5px;color:#111;font-weight:400;">Name Filter:</div>
<div style="left:1536px;top:308px;width:248px;height:25px;background:#fff;border-bottom:1px solid #7a7a7a;border-radius:3px 3px 0 0;box-sizing:border-box"></div>
<div style="left:1400px;top:340px;width:470px;height:410px;background:#fff;border:1px solid #7b8088;border-right-color:#cfd2d6;box-sizing:border-box"></div>
<svg style="left:1521px;top:341px;" width="14" height="8" viewBox="0 0 14 8"><path d="M1 6.5l6-5 6 5" fill="none" stroke="#555" stroke-width="1"/></svg>
<div class="t" style="left:1406.5px;top:350.53px;font-size:14.5px;line-height:14.5px;color:#000;font-weight:700;">Name</div>
<div class="t" style="left:1656.7px;top:350.53px;font-size:14.5px;line-height:14.5px;color:#000;font-weight:700;">Used</div>
<div class="t" style="left:1701.8px;top:350.53px;font-size:14.5px;line-height:14.5px;color:#000;font-weight:700;">Disp</div>
<div class="t" style="left:1743px;top:350.53px;font-size:14.5px;line-height:14.5px;color:#000;font-weight:700;">Lock</div>
<div class="t" style="left:1785px;top:350.53px;font-size:14.5px;line-height:14.5px;color:#000;font-weight:700;">Color</div>
<div style="left:1650px;top:342px;width:1px;height:30px;background:#e5e5e5"></div>
<div style="left:1695px;top:342px;width:1px;height:30px;background:#e5e5e5"></div>
<div style="left:1737px;top:342px;width:1px;height:30px;background:#e5e5e5"></div>
<div style="left:1779px;top:342px;width:1px;height:30px;background:#e5e5e5"></div>
<div style="left:1828px;top:342px;width:1px;height:30px;background:#e5e5e5"></div>
<div style="left:1402px;top:372px;width:427px;height:22px;background:#0078d7"></div>
<div style="left:1402px;top:394px;width:427px;height:24px;background:#f3f3f3"></div>
<div style="left:1402px;top:418px;width:427px;height:1px;background:#dedede"></div>
<div style="left:1650px;top:372px;width:1px;height:22px;background:#1a86dc"></div>
<div style="left:1650px;top:394px;width:1px;height:24px;background:#dcdcdc"></div>
<div style="left:1695px;top:372px;width:1px;height:22px;background:#1a86dc"></div>
<div style="left:1695px;top:394px;width:1px;height:24px;background:#dcdcdc"></div>
<div style="left:1737px;top:372px;width:1px;height:22px;background:#1a86dc"></div>
<div style="left:1737px;top:394px;width:1px;height:24px;background:#dcdcdc"></div>
<div style="left:1779px;top:372px;width:1px;height:22px;background:#1a86dc"></div>
<div style="left:1779px;top:394px;width:1px;height:24px;background:#dcdcdc"></div>
<div style="left:1828px;top:372px;width:1px;height:22px;background:#1a86dc"></div>
<div style="left:1828px;top:394px;width:1px;height:24px;background:#dcdcdc"></div>
<div class="t" style="left:1406px;top:376.53px;font-size:14.5px;line-height:14.5px;color:#fff;font-weight:400;">3D Solids</div>
<div class="t" style="left:1406px;top:400.33px;font-size:14.5px;line-height:14.5px;color:#111;font-weight:400;">Polylines 3D, Labels</div>
<svg style="left:1661.5px;top:372.5px;" width="21" height="20" viewBox="0 0 21 20"><path d="M10.5 0v20M0 10h21" stroke="#fff" stroke-width="5.6"/></svg>
<svg style="left:1661.5px;top:396.5px;" width="21" height="20" viewBox="0 0 21 20"><path d="M10.5 0v20M0 10h21" stroke="#d43a28" stroke-width="5.6"/></svg>
<svg style="left:1706px;top:373.5px;" width="21" height="19" viewBox="0 0 21 19"><path d="M1.5 10.5l6 7 12-16" fill="none" stroke="#fff" stroke-width="3.2" stroke-linecap="round"/></svg>
<svg style="left:1706px;top:397.5px;" width="21" height="19" viewBox="0 0 21 19"><path d="M1.5 10.5l6 7 12-16" fill="none" stroke="#1d5a7e" stroke-width="3.2" stroke-linecap="round"/></svg>
<div style="left:1780px;top:372.5px;width:47px;height:20px;background:#000;border-radius:2px"></div>
<div style="left:1781px;top:396px;width:45px;height:20px;background:#003b7e;border:1.5px solid #000;border-radius:2px;box-sizing:border-box"></div>
<div class="t" style="left:1400.5px;top:772.73px;font-size:14.5px;line-height:14.5px;color:#111;font-weight:400;">Properties for Selected Layer - "3D Solids"</div>
<div style="left:1685px;top:778px;width:183px;height:1px;background:#d0d0d0"></div>
<div style="left:1685px;top:779px;width:183px;height:1px;background:#fff"></div>
<div style="left:1535.2px;top:800.3px;width:16px;height:16px;background:#0067c0;border-radius:3px"></div>
<svg style="left:1535.2px;top:800.3px;" width="16" height="16" viewBox="0 0 16 16"><path d="M3.8 8.2l2.8 2.8 5.6-5.6" fill="none" stroke="#fff" stroke-width="1.2"/></svg>
<div class="t" style="left:1558.3px;top:802.33px;font-size:14.5px;line-height:14.5px;color:#111;font-weight:400;">Display</div>
<div style="left:1620px;top:800.3px;width:16px;height:16px;background:#fafafa;border:1px solid #555;border-radius:3px;box-sizing:border-box"></div>
<div class="t" style="left:1643.4px;top:802.33px;font-size:14.5px;line-height:14.5px;color:#111;font-weight:400;">Lock</div>
<div class="t" style="left:1445.3px;top:837.73px;font-size:14.5px;line-height:14.5px;color:#111;font-weight:400;">Color:</div>
<div style="left:1536.4px;top:830.8px;width:122px;height:27px;background:#fbfbfb;border:1px solid #d0d0d0;border-radius:4px;box-sizing:border-box"></div>
<div style="left:1539.5px;top:832.8px;width:117px;height:23px;background:#000"></div>
<div class="t" style="left:1445.4px;top:873.73px;font-size:14.5px;line-height:14.5px;color:#111;font-weight:400;">Line Weight:</div>
<div style="left:1536px;top:868px;width:123px;height:25px;background:#fff;border-bottom:1px solid #7a7a7a;border-radius:3px 3px 0 0;box-sizing:border-box"></div>
<div class="t" style="left:1539.4px;top:873.73px;font-size:14.5px;line-height:14.5px;color:#111;font-weight:400;">18</div>
<div class="t" style="left:1445.4px;top:908.33px;font-size:14.5px;line-height:14.5px;color:#111;font-weight:400;">Line Style:</div>
<div style="left:1535.5px;top:902.2px;width:155px;height:26px;background:#fcfcfc;border:1px solid #d6d6d6;border-bottom-color:#bdbdbd;border-radius:3px;box-sizing:border-box"></div>
<div style="left:1547px;top:913.5px;width:102px;height:1.3px;background:#111"></div>
<svg style="left:1673.5px;top:911px;" width="12" height="8" viewBox="0 0 12 8"><path d="M1 1.5l5 5 5-5" fill="none" stroke="#444" stroke-width="1.1"/></svg>
<div style="left:1700.5px;top:901.5px;width:91px;height:27px;background:#fbfbfb;border:1px solid #d0d0d0;border-bottom-color:#b8b8b8;border-radius:4px;box-sizing:border-box"></div>
<div class="t" style="left:1718.5px;top:908.73px;font-size:14.5px;line-height:14.5px;color:#111;font-weight:400;">Library...</div>
<div class="t" style="left:1445.4px;top:945.93px;font-size:14.5px;line-height:14.5px;color:#111;font-weight:400;">Text Style:</div>
<div style="left:1535.5px;top:939.2px;width:155px;height:26px;background:#fcfcfc;border:1px solid #d6d6d6;border-bottom-color:#bdbdbd;border-radius:3px;box-sizing:border-box"></div>
<div class="t" style="left:1540px;top:945.53px;font-size:14.5px;line-height:14.5px;color:#111;font-weight:400;">Schedule Style</div>
<svg style="left:1673.5px;top:948px;" width="12" height="8" viewBox="0 0 12 8"><path d="M1 1.5l5 5 5-5" fill="none" stroke="#444" stroke-width="1.1"/></svg>
<div style="left:1700.5px;top:939.5px;width:91px;height:27px;background:#fbfbfb;border:1px solid #d0d0d0;border-bottom-color:#b8b8b8;border-radius:4px;box-sizing:border-box"></div>
<div class="t" style="left:1719.5px;top:946.23px;font-size:14.5px;line-height:14.5px;color:#111;font-weight:400;">Define...</div>
<div style="left:0px;top:1016px;width:1920px;height:64px;background:#f0f0f0"></div>
<div class="t" style="left:3.2px;top:1061.53px;font-size:14.5px;line-height:14.5px;color:#111;font-weight:400;">3D Solid</div>
<svg style="left:5px;top:1024px;" width="2" height="24" viewBox="0 0 2 24"><rect x="0" y="0" width="2" height="2" fill="#c6c6c6"/><rect x="0" y="4" width="2" height="2" fill="#c6c6c6"/><rect x="0" y="8" width="2" height="2" fill="#c6c6c6"/><rect x="0" y="12" width="2" height="2" fill="#c6c6c6"/><rect x="0" y="16" width="2" height="2" fill="#c6c6c6"/><rect x="0" y="20" width="2" height="2" fill="#c6c6c6"/></svg>
<div style="left:605px;top:1057px;width:1px;height:21px;background:#d3d3d3"></div>
<div style="left:823px;top:1057px;width:1px;height:21px;background:#d3d3d3"></div>
<div style="left:920px;top:1057px;width:1px;height:21px;background:#d3d3d3"></div>
<div style="left:1170px;top:1057px;width:1px;height:21px;background:#d3d3d3"></div>
<div style="left:1417.5px;top:1057px;width:1px;height:21px;background:#d3d3d3"></div>
<div style="left:1695px;top:1057px;width:1px;height:21px;background:#d3d3d3"></div>
<div style="left:1823.3px;top:1057px;width:1px;height:21px;background:#d3d3d3"></div>
<div class="t" style="left:611.4px;top:1061.53px;font-size:14.5px;line-height:14.5px;color:#111;font-weight:400;">Select Objects [Space]</div>
<div class="t" style="left:829.3px;top:1061.53px;font-size:14.5px;line-height:14.5px;color:#111;font-weight:400;">All Floors</div>
<div class="t" style="left:927px;top:1061.53px;font-size:14.5px;line-height:14.5px;color:#111;font-weight:400;">Object Layer: 3D Solids</div>
<div class="t" style="left:1175.6px;top:1061.53px;font-size:14.5px;line-height:14.5px;color:#111;font-weight:400;">Drawing Group: 21 - CAD</div>
<div class="t" style="left:1422.8px;top:1061.53px;font-size:14.5px;line-height:14.5px;color:#111;font-weight:400;">X: 229", Y: 205 5/16", Z: 13 3/16"</div>
<div class="t" style="left:1701px;top:1061.53px;font-size:14.5px;line-height:14.5px;color:#111;font-weight:400;letter-spacing:-0.15px">Finished Renderi...</div>
<div class="t" style="left:1829.3px;top:1061.53px;font-size:14.5px;line-height:14.5px;color:#111;font-weight:400;letter-spacing:-0.15px">1299 x 823</div>
<svg style="left:15.5px;top:62.5px;" width="26" height="26" viewBox="0 0 26 26"><path d="M3 1H17.5L23.3 6.8V25H3z" fill="#fff" stroke="#1f6f97" stroke-width="1.4"/><path d="M15.7 0.8H18.5L23.3 5.5V7.7H15.7z" fill="#005b86"/></svg>
<svg style="left:49.5px;top:62.5px;" width="26" height="26" viewBox="0 0 26 26"><path d="M0.9 25V4.6L2.4 3.6 3.2 0.9H10.1L11.9 4.6H25.1V25z" fill="#f8e6a6" stroke="#d38c1c" stroke-width="1.5" stroke-linejoin="round"/></svg>
<svg style="left:83.5px;top:62.5px;" width="26" height="26" viewBox="0 0 26 26"><rect x="1.2" y="1.1" width="24" height="24" fill="#fff" stroke="#1f6f97" stroke-width="1.6"/><path d="M4.7 1V9.2H21.6V1" fill="none" stroke="#1f6f97" stroke-width="1.4"/><rect x="5.7" y="16.8" width="14.9" height="8.4" fill="#005b86"/><rect x="12.3" y="17.9" width="7.2" height="6.6" fill="#fff"/></svg>
<svg style="left:117.5px;top:62.5px;" width="26" height="26" viewBox="0 0 26 26"><path d="M7 12V3Q7 1 9 1H22L20.3 4.5V12" fill="#fff" stroke="#8a8a8a" stroke-width="1.4"/><rect x="0.5" y="7.7" width="25.2" height="12.8" fill="#005b86"/><rect x="3.1" y="9.5" width="20" height="4.8" fill="#fff"/><path d="M6 13.6H20.5" stroke="#8a8a8a" stroke-width="1.3"/><rect x="23" y="17" width="1.4" height="1.4" fill="#fff"/><rect x="6.8" y="18.4" width="12.7" height="7" fill="#fff" stroke="#8a8a8a" stroke-width="1.4"/><path d="M9 21.2H17M9 23.2H17" stroke="#aaa" stroke-width="0.9"/></svg>
<svg style="left:151.0px;top:62.5px;" width="26" height="26" viewBox="0 0 26 26"><path d="M2 3q0-2 2-2h1v18H4q-2 0-2 2zM5 3h19v16H5" fill="#fff" stroke="#1f6f97" stroke-width="1.2"/><path d="M8 6h12v8H8zM8 10h12M14 6v8" fill="none" stroke="#888" stroke-width="1"/><path d="M13 25v-4M11 22.5l2-2.5 2 2.5" fill="none" stroke="#d43a28" stroke-width="1.5"/></svg>
<svg style="left:185.0px;top:62.5px;" width="26" height="26" viewBox="0 0 26 26"><path d="M7 10C10 6 16 5 19.5 9C23 13 21.5 19 17.2 23.5" fill="none" stroke="#005b86" stroke-width="4"/><path d="M1 5.5V15.5H10.5z" fill="#005b86"/></svg>
<svg style="left:219.0px;top:62.5px;" width="26" height="26" viewBox="0 0 26 26"><path d="M19 10C16 6 10 5 6.5 9C3 13 4.5 19 8.8 23.5" fill="none" stroke="#8a8a8a" stroke-width="4"/><path d="M25 5.5V15.5H15.5z" fill="#8a8a8a"/></svg>
<svg style="left:252.5px;top:62.5px;" width="26" height="26" viewBox="0 0 26 26"><rect x="1.2" y="1.2" width="23.6" height="23.6" fill="#fff" stroke="#005b86" stroke-width="1.8"/><rect x="2" y="2" width="22" height="2.6" fill="#777"/><rect x="3.8" y="6.3" width="8" height="16.4" fill="#fff" stroke="#1f6f97" stroke-width="1.4"/><circle cx="7.8" cy="10.2" r="2.2" fill="#005b86"/><circle cx="7.8" cy="18.2" r="2.2" fill="#005b86"/><path d="M15 23V7h3.8a4 4 0 010 8.3H15" fill="none" stroke="#d43a28" stroke-width="2.1"/></svg>
<svg style="left:286.0px;top:62.5px;" width="26" height="26" viewBox="0 0 26 26"><path d="M5.5 8.2C5.8 4 9 1.5 13 1.5s7.2 2.4 7.2 6.2c0 4.3-6.2 5.4-6.2 9.5v1.6" fill="none" stroke="#005b86" stroke-width="4.2"/><rect x="11.6" y="21.8" width="4.6" height="3.6" rx="1" fill="#005b86"/></svg>
<svg style="left:334.5px;top:62.5px;" width="26" height="26" viewBox="0 0 26 26"><path d="M1.5 1.5h13l5 5v18h-18z" fill="#fff" stroke="#1f6f97" stroke-width="1.3"/><path d="M14.5 1.5v5h5" fill="#005b86"/><path d="M4 13v-2h3M4 20v2h3M16 11h-2" fill="none" stroke="#888" stroke-width="1.4"/><circle cx="9.5" cy="17" r="2.8" fill="none" stroke="#888" stroke-width="1.4"/><path d="M23.5 2.5l2 1.2-7.5 17-2.5 3 .3-3.6z" fill="#f0b429" stroke="#333" stroke-width="0.8"/><path d="M23.5 2.5l2 1.2-1 2.2-2-1.2z" fill="#d43a28"/></svg>
<svg style="left:368.5px;top:62.5px;" width="26" height="26" viewBox="0 0 26 26"><path d="M7 5h11l5 5v14.5H7z" fill="#fff" stroke="#1f6f97" stroke-width="1.3"/><path d="M18 5v5h5" fill="#005b86"/><path d="M1.5 1v12M1.5 7h9M10.5 1v12" stroke="#005b86" stroke-width="3"/><circle cx="15" cy="17" r="3" fill="none" stroke="#888" stroke-width="1.4"/><path d="M9 14v-2M9 20v2h3M21 14v-2" fill="none" stroke="#888" stroke-width="1.3"/></svg>
<svg style="left:402.5px;top:62.5px;" width="26" height="26" viewBox="0 0 26 26"><path d="M7 5h11l5 5v14.5H7z" fill="#fff" stroke="#1f6f97" stroke-width="1.3"/><path d="M18 5v5h5" fill="#005b86"/><path d="M1.5 1v12M1.5 7h9M10.5 1v12" stroke="#d43a28" stroke-width="3"/><circle cx="15" cy="17" r="3" fill="none" stroke="#888" stroke-width="1.4"/><path d="M9 14v-2M9 20v2h3M21 14v-2" fill="none" stroke="#888" stroke-width="1.3"/></svg>
<div style="left:433.5px;top:62px;width:245px;height:26px;background:#ffffff;border:1px solid #dadada;box-sizing:border-box;border-radius:2px"></div>
<svg style="left:438px;top:64px;" width="22" height="22" viewBox="0 0 22 22"><path d="M2 1.5h6v3h4v3" fill="none" stroke="#1f6f97" stroke-width="1.2"/><rect x="2" y="4.5" width="7" height="10" fill="none" stroke="#1f6f97" stroke-width="1.2"/><rect x="7" y="8.5" width="7" height="10" fill="#fff" stroke="#1f6f97" stroke-width="1.2"/><path d="M13.5 12v3q0 3 3 3t3-3v-3M16.5 18v3.5" fill="none" stroke="#d43a28" stroke-width="1.6"/></svg>
<div class="t" style="left:462.5px;top:69.64px;font-size:14.6px;line-height:14.6px;color:#111;font-weight:400;">Plan Default Set</div>
<svg style="left:661.5px;top:70px;" width="12" height="8" viewBox="0 0 12 8"><path d="M1 1.5l5 5 5-5" fill="none" stroke="#444" stroke-width="1.1"/></svg>
<svg style="left:682.0px;top:62.5px;" width="26" height="26" viewBox="0 0 26 26"><rect x="5" y="1.5" width="19.5" height="20" fill="#dfe9f0" stroke="#1f6f97" stroke-width="1.2"/><rect x="1.5" y="4.5" width="20" height="20.5" fill="#fff" stroke="#1f6f97" stroke-width="1.4"/><rect x="4.5" y="10" width="12" height="11" fill="none" stroke="#888" stroke-width="1.5"/><path d="M6.5 14l4 4.5 8-11" fill="none" stroke="#d43a28" stroke-width="2.2"/></svg>
<svg style="left:716.0px;top:62.5px;" width="26" height="26" viewBox="0 0 26 26"><path d="M8 2v6.5q0 1.5 2 1.5h6q2 0 2-1.5V2q5 2.5 5 7.5 0 5-5 7v7.5H8V17Q3 15 3 9.5 3 4.5 8 2z" fill="#fff" stroke="#1f6f97" stroke-width="1.7"/></svg>
<svg style="left:764.5px;top:62.5px;" width="26" height="26" viewBox="0 0 26 26"><path d="M1.5 8.5l11.5 9.5 11.5-9.5" fill="none" stroke="#888" stroke-width="3.3"/><path d="M1.5 8.5l11.5 9.5 11.5-9.5" fill="none" stroke="#fff" stroke-width="1.1"/></svg>
<div class="t" style="left:807px;top:68.88px;font-size:15.5px;line-height:15.5px;color:#111;font-weight:400;">1</div>
<svg style="left:832.5px;top:62.5px;" width="26" height="26" viewBox="0 0 26 26"><path d="M1.5 17.5l11.5-9.5 11.5 9.5" fill="none" stroke="#1f6f97" stroke-width="3.3"/><path d="M1.5 17.5l11.5-9.5 11.5 9.5" fill="none" stroke="#fff" stroke-width="1.1"/></svg>
<svg style="left:880.5px;top:62.5px;" width="26" height="26" viewBox="0 0 26 26"><path d="M0 12L13 1l13 11z" fill="#005b86"/><rect x="2" y="11.5" width="22" height="13" fill="#fff" stroke="#005b86" stroke-width="1.8"/><path d="M5 24.5v-9h5v9" fill="none" stroke="#005b86" stroke-width="1.8"/><rect x="14" y="15" width="7" height="5" fill="none" stroke="#005b86" stroke-width="1.5"/><path d="M15 17.5h5" stroke="#005b86" stroke-width="1"/><path d="M22 25h4v-4z" fill="#111"/></svg>
<svg style="left:914.5px;top:62.5px;" width="26" height="26" viewBox="0 0 26 26"><rect x="1" y="6" width="24" height="16" rx="2" fill="#005b86"/><rect x="15" y="3" width="7" height="4" fill="#005b86"/><rect x="2.5" y="7.5" width="3.5" height="13" rx="1.5" fill="#fff"/><circle cx="15" cy="14" r="5.5" fill="#fff"/><circle cx="15" cy="14" r="3.8" fill="#005b86"/><path d="M22 25h4v-4z" fill="#111"/></svg>
<svg style="left:948.0px;top:62.5px;" width="26" height="26" viewBox="0 0 26 26"><path d="M3 7q0-5 6.5-5t6.5 5v11q0 6-6.5 6T3 18z" fill="#8a8a8a"/><path d="M3 10h13M9.5 2v8" stroke="#fff" stroke-width="1"/><rect x="8" y="5" width="3" height="5" rx="1.5" fill="#fff" stroke="#555" stroke-width="0.6"/><path d="M21 2v20M18.5 5L21 1.5 23.5 5M18.5 19l2.5 3.5 2.5-3.5" fill="none" stroke="#333" stroke-width="1.3"/><circle cx="21" cy="12" r="1.5" fill="#333"/><path d="M22 25h4v-4z" fill="#111"/></svg>
<svg style="left:982.5px;top:62.5px;" width="26" height="26" viewBox="0 0 26 26"><path d="M2 12L12 3l6 5" fill="#fbe7a9" stroke="#d9931d" stroke-width="1.4"/><path d="M3 12v10h13" fill="#fff" stroke="#1f6f97" stroke-width="1.6"/><path d="M6 22v-6h4v6" fill="none" stroke="#1f6f97" stroke-width="1.5"/><path d="M9 3L2 10M2 4v6h6" fill="none" stroke="#d9931d" stroke-width="2"/><path d="M16 1.5v3q0 1 1.2 1h2.6q1.2 0 1.2-1v-3q3 1.5 3 4.5t-3 4v12h-5V10q-3-1-3-4t3-4.5z" fill="#fff" stroke="#1f6f97" stroke-width="1.5"/><rect x="1" y="22" width="24" height="3" fill="#2ea043"/><path d="M22 25h4v-4z" fill="#111"/></svg>
<svg style="left:1016.5px;top:62.5px;" width="26" height="26" viewBox="0 0 26 26"><ellipse cx="6" cy="9" rx="4.2" ry="7.8" fill="#005b86"/><ellipse cx="6.5" cy="21.8" rx="3" ry="3.2" fill="#005b86"/><ellipse cx="19" cy="9" rx="4.2" ry="7.8" fill="#005b86"/><ellipse cx="18.5" cy="21.8" rx="3" ry="3.2" fill="#005b86"/><path d="M22 25h4v-4z" fill="#111"/></svg>
<svg style="left:1050.0px;top:62.5px;" width="26" height="26" viewBox="0 0 26 26"><rect x="1" y="5" width="24" height="19" rx="3" fill="#fff" stroke="#888" stroke-width="1.3"/><rect x="9" y="2" width="8" height="3" rx="1" fill="none" stroke="#888" stroke-width="1.2"/><circle cx="13" cy="14.5" r="6.5" fill="none" stroke="#888" stroke-width="1.3"/><circle cx="13" cy="14.5" r="4.6" fill="#888"/></svg>
<svg style="left:1083.5px;top:62.5px;" width="26" height="26" viewBox="0 0 26 26"><path d="M1 13L13 2l12 11" fill="#fff" stroke="#888" stroke-width="1.8"/><rect x="1" y="13" width="24" height="12" fill="#005b86"/><rect x="5" y="16" width="4" height="9" fill="#fff"/><rect x="14" y="16" width="7" height="6" fill="#fff"/><path d="M14 19h7" stroke="#005b86" stroke-width="1.2"/><path d="M22 25h4v-4z" fill="#111"/></svg>
<svg style="left:1117.5px;top:62.5px;" width="26" height="26" viewBox="0 0 26 26"><circle cx="13" cy="11" r="6" fill="#fde9a8" stroke="#e6a21e" stroke-width="1.5"/><rect x="10.5" y="17" width="5" height="7" fill="#bbb" stroke="#888" stroke-width="0.8"/><path d="M13 1v0M3 11H0M26 11h-3M5.5 3.5l-2-2M20.5 3.5l2-2M5.5 18.5l-2 2M20.5 18.5l2 2" stroke="#e6a21e" stroke-width="1.6"/><path d="M22 25h4v-4z" fill="#111"/></svg>
<svg style="left:1151.0px;top:62.5px;" width="26" height="26" viewBox="0 0 26 26"><circle cx="10" cy="15" r="3.5" fill="#fff" stroke="#aaa" stroke-width="1"/><path d="M10 7v3M10 20v3M2 15h3M15 15h3M4.5 9.5l2 2M13.5 18.5l2 2M4.5 20.5l2-2" stroke="#aaa" stroke-width="1"/><path d="M1 25L24 2" stroke="#555" stroke-width="1.1"/><path d="M25 1v9l-9-9z" fill="#888"/></svg>
<svg style="left:1184.5px;top:62.5px;" width="26" height="26" viewBox="0 0 26 26"><path d="M1 2q3-3 6 0l5 3-5 3q-3 3-6 0z" fill="#005b86"/><rect x="13" y="8" width="9" height="17" rx="1.5" fill="#fff" stroke="#222" stroke-width="1.6"/><rect x="15.5" y="4" width="4" height="4" fill="none" stroke="#222" stroke-width="1.4"/><rect x="16" y="13" width="3" height="6" fill="#005b86"/></svg>
<svg style="left:1218.5px;top:62.5px;" width="26" height="26" viewBox="0 0 26 26"><rect x="1" y="17" width="8" height="8" fill="#005b86"/><path d="M4 22l12-12" stroke="#111" stroke-width="4"/><path d="M4 22l12-12" stroke="#fff" stroke-width="1.8"/><path d="M14 7l5 5" stroke="#111" stroke-width="3"/><circle cx="21" cy="5" r="4" fill="#111"/></svg>
<svg style="left:1252.5px;top:62.5px;" width="26" height="26" viewBox="0 0 26 26"><path d="M1 13l5-3h10v15H1z" fill="#005b86"/><path d="M5 22l12-12" stroke="#111" stroke-width="4"/><path d="M5 22l12-12" stroke="#fff" stroke-width="1.8"/><path d="M15 7l5 5" stroke="#111" stroke-width="3"/><circle cx="22" cy="5" r="3.5" fill="#111"/><ellipse cx="19.5" cy="18.5" rx="3.5" ry="5" fill="#fff" stroke="#d43a28" stroke-width="1.4"/></svg>
<svg style="left:1286.0px;top:62.5px;" width="26" height="26" viewBox="0 0 26 26"><path d="M4 5q9-7 18 0M4 21q9 7 18 0M6 6q10 6 14 14" fill="none" stroke="#111" stroke-width="2.6"/><path d="M2 1l22 24M24 1L2 25" stroke="#d43a28" stroke-width="1.8"/></svg>
<svg style="left:1320.5px;top:62.5px;" width="26" height="26" viewBox="0 0 26 26"><path d="M2 19L20 1" stroke="#d43a28" stroke-width="3"/><path d="M4 21L22 3" stroke="#777" stroke-width="3"/><path d="M6 24L24 6" stroke="#005b86" stroke-width="3"/></svg>
<div style="left:1365px;top:59px;width:34px;height:32px;background:#cce8ff;border:1px solid #99d1ff;border-radius:3px;box-sizing:border-box"></div>
<svg style="left:1369.5px;top:62.5px;" width="26" height="26" viewBox="0 0 26 26"><rect x="1" y="2" width="24" height="23" fill="#aaa"/><path d="M3 11l4-6h8l2 2h5l2 4z" fill="#fff" stroke="#d43a28" stroke-width="1.5"/><rect x="1" y="12" width="12" height="13" fill="#fff"/><rect x="3" y="15" width="3" height="5" fill="none" stroke="#555" stroke-width="0.8"/><rect x="13.5" y="13.5" width="11" height="11" fill="#fff" stroke="#222" stroke-width="1.2"/><path d="M16.5 20l2.5 3 5-6.5" fill="none" stroke="#1a1aa8" stroke-width="1.5"/></svg>
<svg style="left:1402.5px;top:62.5px;" width="26" height="26" viewBox="0 0 26 26"><rect x="1" y="2" width="24" height="23" fill="#aaa"/><path d="M1 12q8-2 12-2t12 3v12H1z" fill="#fff" stroke="#3aa04a" stroke-width="1.6"/><path d="M1 25V12" stroke="#3aa04a" stroke-width="1.6"/><rect x="10.5" y="3" width="5" height="5" rx="1" fill="#fff"/><path d="M1 14l5 2-5 3" fill="#fff" stroke="#3aa04a" stroke-width="1"/></svg>
<svg style="left:1435.5px;top:62.5px;" width="26" height="26" viewBox="0 0 26 26"><rect x="1" y="2" width="24" height="23" fill="#999"/><rect x="1" y="3" width="24" height="3" fill="#8ab"/><rect x="2.5" y="6" width="11" height="12" fill="#fff" stroke="#1f6f97" stroke-width="1.2"/><rect x="14" y="6" width="10" height="8" fill="#fff" stroke="#1f6f97" stroke-width="1.2"/><rect x="14" y="15" width="10" height="9" fill="#fff" stroke="#1f6f97" stroke-width="1.2"/><path d="M5 12h5M17 10h4M17 19h4" stroke="#1f6f97" stroke-width="1.5"/></svg>
<div style="left:13px;top:97px;width:34px;height:31px;background:#cce8ff;border:1px solid #99d1ff;border-radius:3px;box-sizing:border-box"></div>
<svg style="left:17.0px;top:99.0px;" width="26" height="26" viewBox="0 0 26 26"><path d="M6 2v18l5-4.5L16 14z" fill="#fff" stroke="#1f6f97" stroke-width="1.6"/><rect x="13" y="13" width="11" height="11" fill="#fff" stroke="#222" stroke-width="1.2"/><path d="M16.5 20l2.5 3 5-6.5" fill="none" stroke="#1a1aa8" stroke-width="1.5"/></svg>
<svg style="left:50.5px;top:99.0px;" width="26" height="26" viewBox="0 0 26 26"><clipPath id="bwc"><path d="M2 1H6.5L20.4 7.5V25.6H2z"/></clipPath><path d="M2 1H6.5L20.4 7.5V25.6H2z" fill="#fff"/><g clip-path="url(#bwc)"><path d="M0 9L22 17M0 17.5L22 25.5M0 26L22 34" stroke="#d43a28" stroke-width="4.8"/><path d="M17.8 12v5M10.5 16v6.5M6 24v3" stroke="#fff" stroke-width="1.4"/><path d="M5.5 3.6L20.4 10.2" stroke="#8a8a8a" stroke-width="1"/><path d="M4.8 1V25.6" stroke="#fff" stroke-width="1.6"/><path d="M5.8 1V25.6" stroke="#999" stroke-width="0.9"/></g><path d="M2 1H6.5L20.4 7.5V25.6H2z" fill="none" stroke="#777" stroke-width="1.3"/><path d="M21 25.5h4v-4z" fill="#111"/></svg>
<svg style="left:83.5px;top:99.0px;" width="26" height="26" viewBox="0 0 26 26"><rect x="2.6" y="4.8" width="20.6" height="15.1" fill="#f6f6f6"/><path d="M6.2 4.8v15.1M10.9 4.8v15.1M15.6 4.8v15.1M20.3 4.8v15.1" stroke="#aaa" stroke-width="1.1"/><rect x="2.6" y="1.9" width="20.6" height="2.9" fill="#8a8a8a"/><path d="M2.6 20.4h20.6" stroke="#999" stroke-width="1.1"/><rect x="0.4" y="0.9" width="2.3" height="24.7" fill="#777"/><rect x="23.1" y="0.9" width="2.3" height="24.7" fill="#6e6e6e"/><rect x="0.4" y="0.9" width="4" height="1.5" fill="#666"/><rect x="21.4" y="0.9" width="4" height="1.5" fill="#666"/></svg>
<svg style="left:118.0px;top:99.0px;" width="26" height="26" viewBox="0 0 26 26"><path d="M3 3.5Q13 9.5 22.7 1.5V21.5Q13 29 3 23.5Z" fill="#a3a3a3"/><path d="M3.6 5.2Q13 10.8 22.2 3.6" fill="none" stroke="#fff" stroke-width="1.5"/><path d="M3.5 14.5Q13 19.5 22.5 12.5M3.5 21Q13 26 22.5 19" fill="none" stroke="#fff" stroke-width="1.4"/><path d="M13.5 9.5V24" stroke="#fff" stroke-width="1.3"/></svg>
<svg style="left:151.5px;top:99.0px;" width="26" height="26" viewBox="0 0 26 26"><rect x="3" y="1.5" width="19" height="23" fill="#fff" stroke="#1f6f97" stroke-width="1.7"/><rect x="7" y="5" width="3.5" height="6" fill="none" stroke="#1f6f97" stroke-width="1.2"/><rect x="14" y="5" width="3.5" height="6" fill="none" stroke="#1f6f97" stroke-width="1.2"/><rect x="7" y="14" width="3.5" height="6" fill="none" stroke="#1f6f97" stroke-width="1.2"/><rect x="14" y="14" width="3.5" height="6" fill="none" stroke="#1f6f97" stroke-width="1.2"/><path d="M22 25h4v-4z" fill="#111"/></svg>
<svg style="left:185.0px;top:99.0px;" width="26" height="26" viewBox="0 0 26 26"><path d="M2 2h22M2 24.5h22" stroke="#005b86" stroke-width="1.8"/><rect x="5" y="2" width="16" height="22" fill="none" stroke="#005b86" stroke-width="2.6"/><path d="M5 13h16" stroke="#005b86" stroke-width="2.4"/><path d="M22 25h4v-4z" fill="#111"/></svg>
<svg style="left:218.5px;top:99.0px;" width="26" height="26" viewBox="0 0 26 26"><path d="M1 6l3-4h21l-3 4z" fill="#666"/><rect x="1" y="6" width="21" height="19" fill="#fff" stroke="#222" stroke-width="1.8"/><path d="M22 6l3-4v19l-3 4z" fill="#fff" stroke="#222" stroke-width="1.6"/><path d="M11.5 10v15M1 10h21" stroke="#222" stroke-width="1.5"/><circle cx="9" cy="14" r="0.8" fill="#222"/><circle cx="14" cy="14" r="0.8" fill="#222"/><path d="M22 25h4v-4z" fill="#111"/></svg>
<svg style="left:252.5px;top:99.0px;" width="26" height="26" viewBox="0 0 26 26"><rect x="3" y="1" width="17.3" height="24.7" rx="1.5" fill="#005b86"/><rect x="6.9" y="3.8" width="9.7" height="7.8" rx="1" fill="#fff"/><rect x="6.9" y="15" width="9.7" height="7.9" rx="1" fill="#fff"/><path d="M10.3 6v3.8M14.1 6v3.8M10.3 17.2v3.5M14.1 17.2v3.5" stroke="#222" stroke-width="1.3"/><path d="M21 25.5h4v-4z" fill="#111"/></svg>
<svg style="left:286.5px;top:99.0px;" width="26" height="26" viewBox="0 0 26 26"><path d="M0 12.3L4.8 6.6 9.8 1.3 14.4 1 24.4 6.9V18.8L16 25.7H10.7L0 17.3z" fill="#b3b3b3"/><path d="M16 19.4L24.4 11.6V18.8L16 25.7z" fill="#8e8e8e"/><path d="M0 17.3L10.7 25.7H16V19.4L0 12.3z" fill="#a2a2a2"/><path d="M0.6 12.6L16 19.4M5.4 7.3L21.3 14.1M10.4 1.9L24.1 7.6" stroke="#fff" stroke-width="1.7"/><path d="M21 25.5h4v-4z" fill="#111"/></svg>
<svg style="left:320.0px;top:99.0px;" width="26" height="26" viewBox="0 0 26 26"><path d="M0.6 8.2L7.5 1.6H17.5L24.4 8.2z" fill="#fff" stroke="#005b86" stroke-width="1.6" stroke-linejoin="round"/><rect x="2.5" y="8.2" width="20" height="16.8" fill="#fff" stroke="#005b86" stroke-width="1.6"/><rect x="2.5" y="8.2" width="20" height="8" fill="#005b86"/><rect x="6.3" y="10" width="3.8" height="3.5" fill="#fff"/><rect x="15" y="10" width="3.8" height="3.5" fill="#fff"/><rect x="6.3" y="17.9" width="3.7" height="3.1" fill="#005b86"/><rect x="15.3" y="17.6" width="3.7" height="7.6" fill="#005b86"/><path d="M21 25.5h4v-4z" fill="#111"/></svg>
<svg style="left:354.0px;top:99.0px;" width="26" height="26" viewBox="0 0 26 26"><path d="M1 12L13 2l12 10z" fill="#d43a28"/><rect x="3" y="12" width="20" height="12.5" fill="#fff" stroke="#111" stroke-width="1.8"/><rect x="6" y="15" width="4" height="4" fill="none" stroke="#111" stroke-width="1.3"/><rect x="14" y="15" width="5" height="9.5" fill="#111"/><path d="M22 25h4v-4z" fill="#111"/></svg>
<svg style="left:387.5px;top:99.0px;" width="26" height="26" viewBox="0 0 26 26"><path d="M1 10L13 2l12 8z" fill="#fff" stroke="#111" stroke-width="1.8"/><rect x="4" y="12" width="3" height="11" fill="#005b86"/><rect x="19" y="12" width="3" height="11" fill="#005b86"/><path d="M2 24h22" stroke="#333" stroke-width="1.8"/><path d="M22 25h4v-4z" fill="#111"/></svg>
<svg style="left:421.0px;top:99.0px;" width="26" height="26" viewBox="0 0 26 26"><path d="M1 11L13 2l12 9" fill="none" stroke="#d43a28" stroke-width="1.6"/><path d="M3 10v15h20V10M3 17h20M7 8v17M11 5v20M15 5v20M19 8v17M5 6l6-4M9 8l6-5M13 9l7-5" fill="none" stroke="#d43a28" stroke-width="1.2"/><path d="M22 25h4v-4z" fill="#111"/></svg>
<svg style="left:454.5px;top:99.0px;" width="26" height="26" viewBox="0 0 26 26"><path d="M1 12l9-7 15 6-9 7z" fill="#ccc" stroke="#888" stroke-width="1.1"/><path d="M4 10l15 6M7 7.5l15 6" stroke="#fff" stroke-width="1.2"/><path d="M1 12l15 6 9-7v1.5l-9 7L1 13.5z" fill="#777"/><path d="M22 25h4v-4z" fill="#111"/></svg>
<svg style="left:489.0px;top:99.0px;" width="26" height="26" viewBox="0 0 26 26"><path d="M2 11L11 2l13 10v13H11L2 20z" fill="#fff" stroke="#888" stroke-width="1.6"/><path d="M11 2v23M2 11l9 3M6 6l9 8M9 4l9 8" fill="none" stroke="#999" stroke-width="1.2"/><path d="M22 25h4v-4z" fill="#111"/></svg>
<svg style="left:522.0px;top:99.0px;" width="26" height="26" viewBox="0 0 26 26"><path d="M1 14l4-5h16l4 5v6H1z" fill="#fff" stroke="#888" stroke-width="1.5"/><path d="M1 14h24" stroke="#888" stroke-width="1.3"/><path d="M22 25h4v-4z" fill="#111"/></svg>
<svg style="left:556.0px;top:99.0px;" width="26" height="26" viewBox="0 0 26 26"><path d="M1 8l6-6h17v16l-6 6H1z" fill="#005b86"/><path d="M1 8h17l6-6M18 8v16" fill="none" stroke="#fff" stroke-width="1.2"/><path d="M18.5 9l5-5.5v14l-5 5z" fill="#fff" fill-opacity="0.2" stroke="#005b86" stroke-width="1.5"/><path d="M22 25h4v-4z" fill="#111"/></svg>
<svg style="left:604.5px;top:99.0px;" width="26" height="26" viewBox="0 0 26 26"><path d="M1 19L18 2l7 7L8 26z" fill="#fbe7a9" stroke="#d9931d" stroke-width="1.5"/><path d="M5 15l3 3M8 12l2 2M11 9l3 3M14 6l2 2" stroke="#d9931d" stroke-width="1.4"/><path d="M22 25h4v-4z" fill="#111"/></svg>
<svg style="left:638.5px;top:99.0px;" width="26" height="26" viewBox="0 0 26 26"><path d="M4 25L12 3l8 22M7 18h10" fill="none" stroke="#d43a28" stroke-width="2.3"/><path d="M1 25L25 1" stroke="#111" stroke-width="1.3"/><path d="M25 1l-6 1.5 4.5 4.5zM1 25l6-1.5L2.5 19z" fill="#111"/><path d="M22 25h4v-4z" fill="#111"/></svg>
<svg style="left:673.5px;top:99.0px;" width="26" height="26" viewBox="0 0 26 26"><path d="M3 6V3h20v3M13 3v21M9 24h8" fill="none" stroke="#005b86" stroke-width="3.2"/><path d="M22 25h4v-4z" fill="#111"/></svg>
<svg style="left:705.5px;top:99.0px;" width="26" height="26" viewBox="0 0 26 26"><path d="M6 4q3-3 7 0 4-3 7 1 5 1 4 6 2 4-2 7 0 5-5 4-3 3-7 1-4 2-6-2-4-2-2-6-3-4 0-7 0-4 4-4z" fill="#fff" stroke="#333" stroke-width="1.2"/><path d="M3 3l3-1 10 18-1 5-3-3z" fill="#f0b429" stroke="#333" stroke-width="0.8"/><path d="M3 3l3-1 1.5 2.5-3 1.5z" fill="#d43a28"/></svg>
<svg style="left:740.5px;top:99.0px;" width="26" height="26" viewBox="0 0 26 26"><path d="M2 2l22 22M24 2L2 24" stroke="#222" stroke-width="1.6"/><path d="M22 25h4v-4z" fill="#111"/></svg>
<svg style="left:774.0px;top:99.0px;" width="26" height="26" viewBox="0 0 26 26"><path d="M2 24L24 2" stroke="#222" stroke-width="1.6"/><path d="M22 25h4v-4z" fill="#111"/></svg>
<svg style="left:807.5px;top:99.0px;" width="26" height="26" viewBox="0 0 26 26"><path d="M2 25Q2 4 24 2" fill="none" stroke="#222" stroke-width="1.6"/><path d="M22 25h4v-4z" fill="#111"/></svg>
<svg style="left:841.0px;top:99.0px;" width="26" height="26" viewBox="0 0 26 26"><ellipse cx="13" cy="13" rx="11" ry="10" fill="none" stroke="#222" stroke-width="1.6"/><path d="M22 25h4v-4z" fill="#111"/></svg>
<svg style="left:875.5px;top:99.0px;" width="26" height="26" viewBox="0 0 26 26"><rect x="3" y="3" width="19" height="19" fill="none" stroke="#222" stroke-width="1.8"/><path d="M22 25h4v-4z" fill="#111"/></svg>
<svg style="left:908.5px;top:99.0px;" width="26" height="26" viewBox="0 0 26 26"><path d="M1 25q2-10 6-9t6 2 5-6 7-11" fill="none" stroke="#222" stroke-width="1.6"/></svg>
<svg style="left:942.5px;top:99.0px;" width="26" height="26" viewBox="0 0 26 26"><path d="M1 3h18v17H1zM1 9l8-6M1 15l8-6M1 20l8-5M9 3v17M9 9h10M9 15h10" fill="none" stroke="#1f6f97" stroke-width="1.2"/><path d="M12 25l6-14 6 14M14 20h8" fill="none" stroke="#d43a28" stroke-width="2.4"/></svg>
<svg style="left:975.5px;top:99.0px;" width="26" height="26" viewBox="0 0 26 26"><rect x="4" y="1" width="20" height="20" fill="#fff" stroke="#1f6f97" stroke-width="1.2"/><rect x="1.5" y="3.5" width="20" height="21" fill="#fff" stroke="#1f6f97" stroke-width="1.4"/><text x="3" y="17" font-family="Liberation Sans" font-weight="700" font-size="7.5" fill="#d43a28">CAD</text></svg>
<svg style="left:15.0px;top:1022.5px;" width="26" height="26" viewBox="0 0 26 26"><path d="M7 14q0-9 8-9h4" fill="none" stroke="#d43a28" stroke-width="2.4"/><path d="M17 1l7 4.5-7 4.5z" fill="#d43a28"/><text x="0.5" y="25" font-family="Liberation Sans" font-size="12.5" fill="#222" textLength="25" lengthAdjust="spacingAndGlyphs">next</text></svg>
<svg style="left:48.78px;top:1022.5px;" width="26" height="26" viewBox="0 0 26 26"><path d="M2 2l7 2v19l-7 2z" fill="#005b86"/><path d="M9 4h12v18" fill="none" stroke="#1f6f97" stroke-width="1.6"/></svg>
<svg style="left:82.56px;top:1022.5px;" width="26" height="26" viewBox="0 0 26 26"><path d="M2 8l11-5 11 5-11 5z" fill="#777"/><path d="M2 8l11 5v12L2 20z" fill="#888"/><path d="M24 8l-11 5v12l11-5z" fill="#005b86"/><path d="M2 25q0-9 9-9h4" fill="none" stroke="#d43a28" stroke-width="2.4"/><path d="M14 11l7 5-7 5z" fill="#d43a28"/></svg>
<svg style="left:116.34px;top:1022.5px;" width="26" height="26" viewBox="0 0 26 26"><rect x="1" y="8" width="6" height="10" fill="#005b86"/><rect x="19" y="8" width="6" height="10" fill="#005b86"/><path d="M8 11h5V8l5 5-5 5v-3H8z" fill="#fff" stroke="#222" stroke-width="1.3"/></svg>
<svg style="left:150.12px;top:1022.5px;" width="26" height="26" viewBox="0 0 26 26"><rect x="3" y="3" width="20" height="20" fill="#fff" stroke="#1f6f97" stroke-width="1.4"/><path d="M1 1l24 24M25 1L1 25" stroke="#d43a28" stroke-width="1.8"/></svg>
<svg style="left:183.9px;top:1022.5px;" width="26" height="26" viewBox="0 0 26 26"><rect x="2" y="5" width="4" height="10" fill="none" stroke="#1f6f97" stroke-width="1.4"/><rect x="20" y="5" width="4" height="10" fill="none" stroke="#1f6f97" stroke-width="1.4"/><path d="M8 10h8" stroke="#d43a28" stroke-width="1.6"/><path d="M14 7l4 3-4 3z" fill="#d43a28"/><path d="M12 23h2M16 23h2M20 23h2" stroke="#111" stroke-width="2"/></svg>
<svg style="left:217.68px;top:1022.5px;" width="26" height="26" viewBox="0 0 26 26"><rect x="2" y="13" width="4" height="11" fill="none" stroke="#1f6f97" stroke-width="1.4"/><rect x="11" y="13" width="4" height="11" fill="none" stroke="#1f6f97" stroke-width="1.4"/><rect x="20" y="13" width="4" height="11" fill="none" stroke="#1f6f97" stroke-width="1.4"/><path d="M8 5h6M12 2l4 3-4 3z" stroke="#111" stroke-width="2" fill="#111"/></svg>
<svg style="left:251.46000000000004px;top:1022.5px;" width="26" height="26" viewBox="0 0 26 26"><rect x="1.5" y="2" width="23" height="22" fill="#fff" stroke="#1f6f97" stroke-width="1.4"/><rect x="1.5" y="2" width="23" height="2.5" fill="#666"/><path d="M4 8h9M4 12h6M4 16h9M4 20h7M16 8h6M16 12h6" stroke="#1f6f97" stroke-width="1.1"/><path d="M14 11v11l3-3 3 5 2-1-3-5h4z" fill="#fff" stroke="#1f6f97" stroke-width="1.1"/></svg>
<svg style="left:285.24px;top:1022.5px;" width="26" height="26" viewBox="0 0 26 26"><path d="M2 24h22M9 2v22M17 2v22" stroke="#111" stroke-width="2.4"/></svg>
<svg style="left:319.02px;top:1022.5px;" width="26" height="26" viewBox="0 0 26 26"><path d="M4 22l16-16" stroke="#333" stroke-width="1.2" stroke-dasharray="1.5 2"/><path d="M18 4h6M21 1v6" stroke="#111" stroke-width="1.5"/><path d="M1 22h7M4.5 18.5v7" stroke="#d43a28" stroke-width="1.5"/></svg>
<svg style="left:352.8px;top:1022.5px;" width="26" height="26" viewBox="0 0 26 26"><path d="M1 8l6-5h12l-6 5z" fill="#fff" stroke="#1f6f97" stroke-width="1.4"/><rect x="1" y="8" width="13" height="16" fill="#005b86"/><path d="M16 9l6-5v13l-6 6z" fill="#fff" stroke="#1f6f97" stroke-width="1.6"/></svg>
<svg style="left:386.58000000000004px;top:1022.5px;" width="26" height="26" viewBox="0 0 26 26"><rect x="2" y="2" width="5" height="23" fill="#777"/><rect x="3" y="7" width="3" height="6" fill="#fff"/><path d="M8 2l4 0 4 22h-4z" fill="#fbe7a9" stroke="#d9931d" stroke-width="1.2"/><path d="M17 13h8M21 9v8" stroke="#1f6f97" stroke-width="2.6"/></svg>
<svg style="left:420.36px;top:1022.5px;" width="26" height="26" viewBox="0 0 26 26"><path d="M1 4h5l1 1h4v6H1z" fill="#fff" stroke="#1f6f97" stroke-width="1.2"/><path d="M5 9h13M7 16h13" stroke="#111" stroke-width="2.2"/><path d="M13 14h5l1 1h6v8H13z" fill="#fff" stroke="#1f6f97" stroke-width="1.2"/></svg>
<svg style="left:454.14px;top:1022.5px;" width="26" height="26" viewBox="0 0 26 26"><path d="M1 10h8V5l5 8-5 8v-5H1zM25 10h-5V5l-6 8 6 8v-5h5z" fill="#005b86"/></svg>
<svg style="left:487.92px;top:1022.5px;" width="26" height="26" viewBox="0 0 26 26"><path d="M10 2l5 3v13l-5 2z" fill="#fff" stroke="#1f6f97" stroke-width="1.5"/><path d="M4 19q9 7 18 0" fill="none" stroke="#d43a28" stroke-width="1.6"/><path d="M2 17l4 1-2 3zM24 17l-4 1 2 3z" fill="#d43a28"/></svg>
<svg style="left:521.7px;top:1022.5px;" width="26" height="26" viewBox="0 0 26 26"><path d="M1 13h7l5-10M13 13l5 12M15 13h10" fill="none" stroke="#222" stroke-width="1.5"/></svg>
<svg style="left:555.48px;top:1022.5px;" width="26" height="26" viewBox="0 0 26 26"><path d="M1 25l8-9 5 3 11-12" fill="none" stroke="#222" stroke-width="1.5"/><path d="M2 14l12-6" stroke="#222" stroke-width="1.5"/><path d="M8 12l9-8M16 4l2 2M18 1l1 3" stroke="#d43a28" stroke-width="1.3"/></svg>
<svg style="left:589.26px;top:1022.5px;" width="26" height="26" viewBox="0 0 26 26"><rect x="2" y="8" width="15" height="16" fill="none" stroke="#222" stroke-width="1.8"/><rect x="9" y="2" width="15" height="15" fill="none" stroke="#222" stroke-width="1.8"/></svg>
<svg style="left:623.04px;top:1022.5px;" width="26" height="26" viewBox="0 0 26 26"><rect x="1" y="7" width="16" height="17" fill="#005b86"/><rect x="9" y="2" width="15" height="15" fill="#fff" stroke="#111" stroke-width="1.6"/><rect x="9" y="7" width="8" height="10" fill="#005b86"/></svg>
<svg style="left:656.82px;top:1022.5px;" width="26" height="26" viewBox="0 0 26 26"><rect x="2" y="2" width="16" height="16" fill="#fff" stroke="#111" stroke-width="1.6"/><rect x="8" y="8" width="16" height="16" fill="#005b86"/><rect x="8" y="8" width="10" height="10" fill="#005b86" stroke="#111" stroke-width="1.2"/></svg>
<svg style="left:690.6px;top:1022.5px;" width="26" height="26" viewBox="0 0 26 26"><path d="M4 24l5-11h15l-5 11z" fill="#fff" stroke="#111" stroke-width="1.8"/><path d="M7 21l13-8" stroke="#111" stroke-width="1.2"/><path d="M14 9l4-6M18 3l2 3M16 2l3 0" stroke="#d43a28" stroke-width="1.4"/><path d="M5 13l9-9" stroke="#111" stroke-width="1.2"/></svg>
<svg style="left:724.38px;top:1022.5px;" width="26" height="26" viewBox="0 0 26 26"><path d="M1 13q12-12 24 0" fill="none" stroke="#222" stroke-width="1.5"/><path d="M13 7v10M10 9l3-3 3 3M10 15l3 3 3-3" fill="none" stroke="#222" stroke-width="1.4"/><path d="M6 22h14" stroke="#222" stroke-width="1.5"/></svg>
<svg style="left:758.1600000000001px;top:1022.5px;" width="26" height="26" viewBox="0 0 26 26"><path d="M2 13h22l-3 4H5z" fill="#d43a28"/><path d="M5 9h16l3 4H2z" fill="#e05a45"/></svg>
<svg style="left:791.94px;top:1022.5px;" width="26" height="26" viewBox="0 0 26 26"><path d="M2 4h22M2 24h22M4 4v20M8 7v17M12 7v17M16 7v17M20 7v17M23 4v20" stroke="#222" stroke-width="1.3"/></svg>
<svg style="left:825.72px;top:1022.5px;" width="26" height="26" viewBox="0 0 26 26"><rect x="1.5" y="1.5" width="23" height="23" fill="#fff" stroke="#1f6f97" stroke-width="1.6"/><rect x="4" y="4" width="18" height="18" fill="none" stroke="#1f6f97" stroke-width="1"/><ellipse cx="13" cy="13" rx="6" ry="7" fill="none" stroke="#d43a28" stroke-width="2"/></svg>
<svg style="left:859.5px;top:1022.5px;" width="26" height="26" viewBox="0 0 26 26"><path d="M4 1v24M4 1h20v20" fill="none" stroke="#d43a28" stroke-width="1.2" stroke-dasharray="2 2"/><path d="M4 25v-12M1 16l3-4 3 4M12 8h10M15 5l-4 3 4 3" fill="none" stroke="#d43a28" stroke-width="1.6"/><path d="M8 25V13" stroke="#111" stroke-width="1.2"/></svg>
<svg style="left:893.28px;top:1022.5px;" width="26" height="26" viewBox="0 0 26 26"><path d="M6 25V12q0-8 8-8h6" fill="none" stroke="#111" stroke-width="1.6"/><path d="M3 18l3-5 3 5M15 8h9M18 5l-4 3 4 3" fill="none" stroke="#d43a28" stroke-width="1.8"/></svg>
<svg style="left:927.0600000000001px;top:1022.5px;" width="26" height="26" viewBox="0 0 26 26"><path d="M6 25V13l8-9h6" fill="none" stroke="#111" stroke-width="1.6"/><path d="M3 18l3-5 3 5M15 8h9M18 5l-4 3 4 3" fill="none" stroke="#d43a28" stroke-width="1.8"/></svg>
<svg style="left:960.84px;top:1022.5px;" width="26" height="26" viewBox="0 0 26 26"><path d="M2 23l4-7h14l4 7z" fill="#005b86"/><path d="M6 16h14" stroke="#fff" stroke-width="1"/><path d="M13 14V3M9 7l4-5 4 5" fill="#111" stroke="#111" stroke-width="2"/></svg>
<svg style="left:994.62px;top:1022.5px;" width="26" height="26" viewBox="0 0 26 26"><path d="M22 13A9 9 0 1 1 17 5" fill="none" stroke="#111" stroke-width="1.6"/><path d="M15 1l6 4-6 4z" fill="#111"/><path d="M22 13l3 7-6-2z" fill="#111"/></svg>
<svg style="left:1028.4px;top:1022.5px;" width="26" height="26" viewBox="0 0 26 26"><path d="M1 5h7M4.5 1.5v7" stroke="#d43a28" stroke-width="2"/><path d="M9 3v5q0 2 2 2h3q2 0 2-2V3q4 2 4 6t-4 5v11h-5V14q-4-1-4-5t2-6z" fill="#fff" stroke="#1f6f97" stroke-width="1.6"/></svg>
<svg style="left:1062.18px;top:1022.5px;" width="26" height="26" viewBox="0 0 26 26"><rect x="4" y="4" width="20" height="20" fill="none" stroke="#d43a28" stroke-width="1.2" stroke-dasharray="2 2"/><path d="M8 24V10l6-4 6 4v14M8 14h12M11 24V14" fill="none" stroke="#333" stroke-width="1.6"/><path d="M2 8l6-6M1 4h6" stroke="#d43a28" stroke-width="1.4"/></svg>
<svg style="left:1095.96px;top:1022.5px;" width="26" height="26" viewBox="0 0 26 26"><rect x="2" y="2" width="16" height="22" rx="2" fill="#fff" stroke="#333" stroke-width="1.4"/><rect x="6" y="2" width="3" height="22" fill="#005b86"/><rect x="12" y="2" width="3" height="22" fill="#fbe7a9"/><circle cx="14" cy="12" r="6" fill="none" stroke="#111" stroke-width="2.4"/><path d="M18 16l6 7" stroke="#111" stroke-width="3"/></svg>
<div style="left:1881px;top:131px;width:1px;height:885px;background:#fdfdfd"></div>
<div style="left:1882px;top:1015px;width:38px;height:1px;background:#c8c8c8"></div>
<svg style="left:1887px;top:137px;" width="32" height="2" viewBox="0 0 32 2"><rect x="0" y="0" width="2" height="2" fill="#b8b8b8"/><rect x="4" y="0" width="2" height="2" fill="#b8b8b8"/><rect x="8" y="0" width="2" height="2" fill="#b8b8b8"/><rect x="12" y="0" width="2" height="2" fill="#b8b8b8"/><rect x="16" y="0" width="2" height="2" fill="#b8b8b8"/><rect x="20" y="0" width="2" height="2" fill="#b8b8b8"/><rect x="24" y="0" width="2" height="2" fill="#b8b8b8"/><rect x="28" y="0" width="2" height="2" fill="#b8b8b8"/></svg>
<svg style="left:1887px;top:249px;" width="32" height="2" viewBox="0 0 32 2"><rect x="0" y="0" width="2" height="2" fill="#b8b8b8"/><rect x="4" y="0" width="2" height="2" fill="#b8b8b8"/><rect x="8" y="0" width="2" height="2" fill="#b8b8b8"/><rect x="12" y="0" width="2" height="2" fill="#b8b8b8"/><rect x="16" y="0" width="2" height="2" fill="#b8b8b8"/><rect x="20" y="0" width="2" height="2" fill="#b8b8b8"/><rect x="24" y="0" width="2" height="2" fill="#b8b8b8"/><rect x="28" y="0" width="2" height="2" fill="#b8b8b8"/></svg>
<svg style="left:1887px;top:525px;" width="32" height="2" viewBox="0 0 32 2"><rect x="0" y="0" width="2" height="2" fill="#b8b8b8"/><rect x="4" y="0" width="2" height="2" fill="#b8b8b8"/><rect x="8" y="0" width="2" height="2" fill="#b8b8b8"/><rect x="12" y="0" width="2" height="2" fill="#b8b8b8"/><rect x="16" y="0" width="2" height="2" fill="#b8b8b8"/><rect x="20" y="0" width="2" height="2" fill="#b8b8b8"/><rect x="24" y="0" width="2" height="2" fill="#b8b8b8"/><rect x="28" y="0" width="2" height="2" fill="#b8b8b8"/></svg>
<div style="left:1882px;top:243px;width:38px;height:1px;background:#d8d8d8"></div>
<div style="left:1882px;top:244px;width:38px;height:1px;background:#fdfdfd"></div>
<div style="left:1882px;top:518px;width:38px;height:1px;background:#d8d8d8"></div>
<div style="left:1882px;top:519px;width:38px;height:1px;background:#fdfdfd"></div>
<div style="left:1884px;top:144px;width:34px;height:32px;background:#cce8ff;border:1px solid #99d1ff;border-radius:4px;box-sizing:border-box"></div>
<div style="left:1884px;top:177px;width:34px;height:31px;background:#cce8ff;border:1px solid #99d1ff;border-radius:4px;box-sizing:border-box"></div>
<div style="left:1884px;top:209px;width:34px;height:31px;background:#cce8ff;border:1px solid #99d1ff;border-radius:4px;box-sizing:border-box"></div>
<div style="left:1884px;top:564px;width:34px;height:32px;background:#cce8ff;border:1px solid #99d1ff;border-radius:4px;box-sizing:border-box"></div>
<div style="left:1884px;top:598px;width:34px;height:29px;background:#cce8ff;border:1px solid #99d1ff;border-radius:4px;box-sizing:border-box"></div>
<div style="left:1884px;top:728px;width:34px;height:29px;background:#cce8ff;border:1px solid #99d1ff;border-radius:4px;box-sizing:border-box"></div>
<div style="left:1884px;top:759px;width:34px;height:31px;background:#cce8ff;border:1px solid #99d1ff;border-radius:4px;box-sizing:border-box"></div>
<div style="left:1884px;top:824px;width:34px;height:32px;background:#cce8ff;border:1px solid #99d1ff;border-radius:4px;box-sizing:border-box"></div>
<div style="left:1884px;top:857px;width:34px;height:30px;background:#cce8ff;border:1px solid #99d1ff;border-radius:4px;box-sizing:border-box"></div>
<div style="left:1884px;top:889px;width:34px;height:31px;background:#cce8ff;border:1px solid #99d1ff;border-radius:4px;box-sizing:border-box"></div>
<div style="left:1884px;top:922px;width:34px;height:31px;background:#cce8ff;border:1px solid #99d1ff;border-radius:4px;box-sizing:border-box"></div>
<div style="left:1884px;top:954px;width:34px;height:32px;background:#cce8ff;border:1px solid #99d1ff;border-radius:4px;box-sizing:border-box"></div>
<svg style="left:1888.0px;top:147.0px;" width="26" height="26" viewBox="0 0 26 26"><rect x="3" y="3" width="5" height="21" fill="#777"/><path d="M3 3l2.5-2 2.5 2" fill="#777"/><rect x="4" y="8" width="3" height="6" fill="#fff"/><rect x="10" y="3" width="5" height="21" fill="#005b86"/><rect x="11" y="8" width="3" height="6" fill="#fff"/><path d="M17 3h4l2 13h-5z" fill="#fbe7a9" stroke="#d9931d" stroke-width="1.1"/><rect x="14.5" y="14.5" width="11" height="11" fill="#fff" stroke="#222" stroke-width="1.2"/><path d="M16.5 20l2.5 3 5-6.5" fill="none" stroke="#1a1aa8" stroke-width="1.5"/></svg>
<svg style="left:1888.0px;top:179.0px;" width="26" height="26" viewBox="0 0 26 26"><rect x="4" y="2" width="18" height="22" fill="#fff" stroke="#1f6f97" stroke-width="1.6"/><rect x="4" y="2" width="18" height="2.5" fill="#666"/><path d="M6 7h5v2h8" fill="none" stroke="#1f6f97" stroke-width="1"/><circle cx="8" cy="13" r="2" fill="#005b86"/><circle cx="8" cy="20" r="2" fill="#005b86"/><path d="M11 13h6" stroke="#1f6f97" stroke-width="1.2"/><rect x="14.5" y="14.5" width="11" height="11" fill="#fff" stroke="#222" stroke-width="1.2"/><path d="M16.5 20l2.5 3 5-6.5" fill="none" stroke="#1a1aa8" stroke-width="1.5"/></svg>
<svg style="left:1888.0px;top:212.0px;" width="26" height="26" viewBox="0 0 26 26"><rect x="2" y="3" width="22" height="21" fill="#fff" stroke="#1f6f97" stroke-width="1.5"/><rect x="2" y="3" width="22" height="2.5" fill="#666"/><rect x="5" y="9" width="12" height="12" fill="#e7eef2" stroke="#1f6f97" stroke-width="1.1"/><rect x="7" y="11" width="8" height="8" fill="none" stroke="#888" stroke-width="1.2"/><path d="M8 14l3 3 9-10" fill="none" stroke="#d43a28" stroke-width="2"/><rect x="14.5" y="14.5" width="11" height="11" fill="#fff" stroke="#222" stroke-width="1.2"/><path d="M16.5 20l2.5 3 5-6.5" fill="none" stroke="#1a1aa8" stroke-width="1.5"/></svg>
<svg style="left:1888.0px;top:259.0px;" width="26" height="26" viewBox="0 0 26 26"><rect x="9" y="7" width="15" height="17" fill="#fff" stroke="#1f6f97" stroke-width="1.5"/><circle cx="10" cy="10" r="8" fill="#fff" stroke="#1f6f97" stroke-width="1.8"/><path d="M16 16l8 8" stroke="#666" stroke-width="3"/></svg>
<svg style="left:1888.0px;top:291.5px;" width="26" height="26" viewBox="0 0 26 26"><circle cx="10" cy="10" r="8" fill="#fff" stroke="#1f6f97" stroke-width="1.8"/><path d="M10 5v10M5 10h10" stroke="#005b86" stroke-width="3"/><path d="M16 16l8 8" stroke="#666" stroke-width="3"/></svg>
<svg style="left:1888.0px;top:324.0px;" width="26" height="26" viewBox="0 0 26 26"><circle cx="10" cy="10" r="8" fill="#fff" stroke="#1f6f97" stroke-width="1.8"/><path d="M5 10h10" stroke="#005b86" stroke-width="3"/><path d="M16 16l8 8" stroke="#666" stroke-width="3"/></svg>
<svg style="left:1888.0px;top:357.0px;" width="26" height="26" viewBox="0 0 26 26"><rect x="6" y="2" width="18" height="17" fill="#fff" stroke="#1f6f97" stroke-width="1.6"/><rect x="1.5" y="17" width="6" height="6" fill="#fff" stroke="#111" stroke-width="1.5"/><path d="M16 7l-6 6M10 9v4h4" stroke="#111" stroke-width="1.6" fill="none"/></svg>
<svg style="left:1888.0px;top:389.5px;" width="26" height="26" viewBox="0 0 26 26"><rect x="1.5" y="1.5" width="23" height="23" fill="#fff" stroke="#1f6f97" stroke-width="1.7"/><path d="M4 4l5 5M22 4l-5 5M4 22l5-5M22 22l-5-5" stroke="#1f6f97" stroke-width="1.6"/><path d="M4 4h3M4 4v3M22 4h-3M22 4v3M4 22h3M4 22v-3M22 22h-3M22 22v-3" stroke="#1f6f97" stroke-width="2"/><rect x="10" y="10" width="3" height="3" fill="#005b86"/><rect x="13" y="13" width="3" height="3" fill="#005b86"/><rect x="12" y="8" width="3" height="2" fill="#005b86"/></svg>
<svg style="left:1888.0px;top:422.0px;" width="26" height="26" viewBox="0 0 26 26"><rect x="1.5" y="1.5" width="23" height="23" fill="#fff" stroke="#1f6f97" stroke-width="1.7"/><path d="M4 4l5 5M22 4l-5 5M4 22l5-5M22 22l-5-5" stroke="#1f6f97" stroke-width="1.6"/><path d="M4 4h3M4 4v3M22 4h-3M22 4v3M4 22h3M4 22v-3M22 22h-3M22 22v-3" stroke="#1f6f97" stroke-width="2"/><rect x="9.5" y="9.5" width="7" height="7" fill="none" stroke="#1f6f97" stroke-width="1.4"/></svg>
<svg style="left:1888.0px;top:454.5px;" width="26" height="26" viewBox="0 0 26 26"><rect x="1.5" y="1.5" width="23" height="23" fill="#fff" stroke="#1f6f97" stroke-width="1.7"/><path d="M4 4l5 5M22 4l-5 5M4 22l5-5M22 22l-5-5" stroke="#1f6f97" stroke-width="1.6"/><path d="M4 4h3M4 4v3M22 4h-3M22 4v3M4 22h3M4 22v-3M22 22h-3M22 22v-3" stroke="#1f6f97" stroke-width="2"/></svg>
<svg style="left:1888.0px;top:487.5px;" width="26" height="26" viewBox="0 0 26 26"><rect x="1.5" y="1.5" width="23" height="23" fill="#fff" stroke="#1f6f97" stroke-width="1.7"/><rect x="1.5" y="1.5" width="23" height="2.5" fill="#666"/><path d="M8 21q-4-4-4-7l1-1 3 3V8q1-1 2 0v5-7q1-1 2 0v7-8q1-1 2 0v8-6q1-1 2 0v9q0 4-3 6z" fill="#fff" stroke="#1f6f97" stroke-width="1.2"/></svg>
<svg style="left:1888.0px;top:533.5px;" width="26" height="26" viewBox="0 0 26 26"><path d="M2 20l8-6h15l-8 6z" fill="#999"/><path d="M3 14l7-5h14l-7 5z" fill="#fff" stroke="#999" stroke-width="1"/><path d="M4 8l7-5h13l-7 5z" fill="#fff" stroke="#999" stroke-width="1"/></svg>
<svg style="left:1888.0px;top:567.0px;" width="26" height="26" viewBox="0 0 26 26"><path d="M11 1v18M2 11h16" stroke="#222" stroke-width="1.5"/><rect x="14.5" y="14.5" width="11" height="11" fill="#fff" stroke="#222" stroke-width="1.2"/><path d="M16.5 20l2.5 3 5-6.5" fill="none" stroke="#1a1aa8" stroke-width="1.5"/></svg>
<svg style="left:1888.0px;top:599.0px;" width="26" height="26" viewBox="0 0 26 26"><path d="M1 11l8-8 4 3v5z" fill="#fff" stroke="#1f6f97" stroke-width="1.3"/><rect x="2" y="11" width="11" height="13" fill="#fbe7a9" stroke="#d9931d" stroke-width="1.2"/><rect x="5" y="14" width="4" height="4" fill="none" stroke="#d9931d" stroke-width="1.2"/><path d="M13 3v10l-1 1" stroke="#888" stroke-width="2.4"/><path d="M14 3l10 8h-10z" fill="#111"/><rect x="14.5" y="14.5" width="11" height="11" fill="#fff" stroke="#222" stroke-width="1.2"/><path d="M16.5 20l2.5 3 5-6.5" fill="none" stroke="#1a1aa8" stroke-width="1.5"/></svg>
<svg style="left:1888.0px;top:632.0px;" width="26" height="26" viewBox="0 0 26 26"><rect x="2" y="3" width="22" height="4" fill="#111"/><path d="M2 22h22" stroke="#333" stroke-width="1.5"/><path d="M9 12q-1 5 3 5M17 18q1-5-3-5" fill="none" stroke="#1f6f97" stroke-width="1.5"/><path d="M10 17l2-2v3zM16 13l-2 2v-3z" fill="#1f6f97"/></svg>
<svg style="left:1888.0px;top:664.5px;" width="26" height="26" viewBox="0 0 26 26"><rect x="3" y="2" width="20" height="22" fill="#fff" stroke="#1f6f97" stroke-width="1.6"/><rect x="6" y="5" width="14" height="16" fill="#fff" stroke="#1f6f97" stroke-width="1.2"/></svg>
<svg style="left:1888.0px;top:697.0px;" width="26" height="26" viewBox="0 0 26 26"><path d="M3 2h13l6 6v16H3z" fill="#fff" stroke="#1f6f97" stroke-width="1.5"/><path d="M16 2v6h6" fill="#005b86"/><circle cx="13" cy="15" r="3.5" fill="none" stroke="#1f6f97" stroke-width="1.4"/><path d="M15.5 17.5l5 5" stroke="#666" stroke-width="2"/></svg>
<svg style="left:1888.0px;top:729.5px;" width="26" height="26" viewBox="0 0 26 26"><path d="M2 3h10M7 3v13" stroke="#1f6f97" stroke-width="2"/><path d="M2 25L24 3" stroke="#111" stroke-width="1.4"/><path d="M24 3l-6 1.5 4.5 4.5zM2 25l6-1.5L3.5 19z" fill="#111"/><rect x="14.5" y="14.5" width="11" height="11" fill="#fff" stroke="#222" stroke-width="1.2"/><path d="M16.5 20l2.5 3 5-6.5" fill="none" stroke="#1a1aa8" stroke-width="1.5"/></svg>
<svg style="left:1888.0px;top:761.5px;" width="26" height="26" viewBox="0 0 26 26"><path d="M2 2l6 6M8 2L2 8" stroke="#1f4a66" stroke-width="1.8"/><path d="M5 9v15M11 5h14" stroke="#1f6f97" stroke-width="1.3"/><rect x="14.5" y="14.5" width="11" height="11" fill="#fff" stroke="#222" stroke-width="1.2"/><path d="M16.5 20l2.5 3 5-6.5" fill="none" stroke="#1a1aa8" stroke-width="1.5"/></svg>
<svg style="left:1888.0px;top:793.5px;" width="26" height="26" viewBox="0 0 26 26"><circle cx="5" cy="4" r="1.5" fill="#1f6f97"/><circle cx="11" cy="10" r="1.5" fill="#1f6f97"/><path d="M3 19q12 3 14-15M4 25q18 3 20-20" fill="none" stroke="#1f6f97" stroke-width="1.3"/></svg>
<svg style="left:1888.0px;top:827.0px;" width="26" height="26" viewBox="0 0 26 26"><rect x="2" y="2" width="22" height="22" fill="#fff" stroke="#111" stroke-width="1.4"/><text x="4" y="10" font-family="Liberation Sans" font-size="9" fill="#2ea043">z</text><text x="15" y="10" font-family="Liberation Sans" font-size="9" fill="#1f6f97">y</text><path d="M5 12v9h10" fill="none" stroke="#2ea043" stroke-width="1.2"/><path d="M5 21l8-5" stroke="#1f6f97" stroke-width="1"/><path d="M5 21l8 1" stroke="#d43a28" stroke-width="1"/><rect x="14.5" y="14.5" width="11" height="11" fill="#fff" stroke="#222" stroke-width="1.2"/><path d="M16.5 20l2.5 3 5-6.5" fill="none" stroke="#1a1aa8" stroke-width="1.5"/></svg>
<svg style="left:1888.0px;top:859.0px;" width="26" height="26" viewBox="0 0 26 26"><path d="M2 6h22M2 12h22M2 18h22M6 2v23M12 2v23M18 2v23" stroke="#1f6f97" stroke-width="1.5"/><rect x="14.5" y="14.5" width="11" height="11" fill="#fff" stroke="#222" stroke-width="1.2"/><path d="M16.5 20l2.5 3 5-6.5" fill="none" stroke="#1a1aa8" stroke-width="1.5"/></svg>
<svg style="left:1888.0px;top:892.0px;" width="26" height="26" viewBox="0 0 26 26"><path d="M2 7h22M2 18h22M7 2v23M18 2v23" stroke="#111" stroke-width="1.4"/><circle cx="11" cy="15" r="3" fill="none" stroke="#d43a28" stroke-width="1.4"/><rect x="14.5" y="14.5" width="11" height="11" fill="#fff" stroke="#222" stroke-width="1.2"/><path d="M16.5 20l2.5 3 5-6.5" fill="none" stroke="#1a1aa8" stroke-width="1.5"/></svg>
<svg style="left:1888.0px;top:924.5px;" width="26" height="26" viewBox="0 0 26 26"><path d="M3 8h13M3 8v15h12" fill="none" stroke="#111" stroke-width="1.5"/><rect x="1" y="6" width="4" height="4" fill="#111"/><rect x="1" y="21" width="4" height="4" fill="#111"/><circle cx="18" cy="8" r="5" fill="none" stroke="#111" stroke-width="1.4"/><rect x="16" y="6" width="4" height="4" fill="#111"/><rect x="14.5" y="14.5" width="11" height="11" fill="#fff" stroke="#222" stroke-width="1.2"/><path d="M16.5 20l2.5 3 5-6.5" fill="none" stroke="#1a1aa8" stroke-width="1.5"/></svg>
<svg style="left:1888.0px;top:957.0px;" width="26" height="26" viewBox="0 0 26 26"><path d="M3 2v22" stroke="#111" stroke-width="1.4"/><path d="M5 23l8-13M6 24l17-17M7 20l6-4M4 24h8" stroke="#d43a28" stroke-width="1.3" stroke-dasharray="2 2"/><rect x="14.5" y="14.5" width="11" height="11" fill="#fff" stroke="#222" stroke-width="1.2"/><path d="M16.5 20l2.5 3 5-6.5" fill="none" stroke="#1a1aa8" stroke-width="1.5"/></svg>
</body></html>
